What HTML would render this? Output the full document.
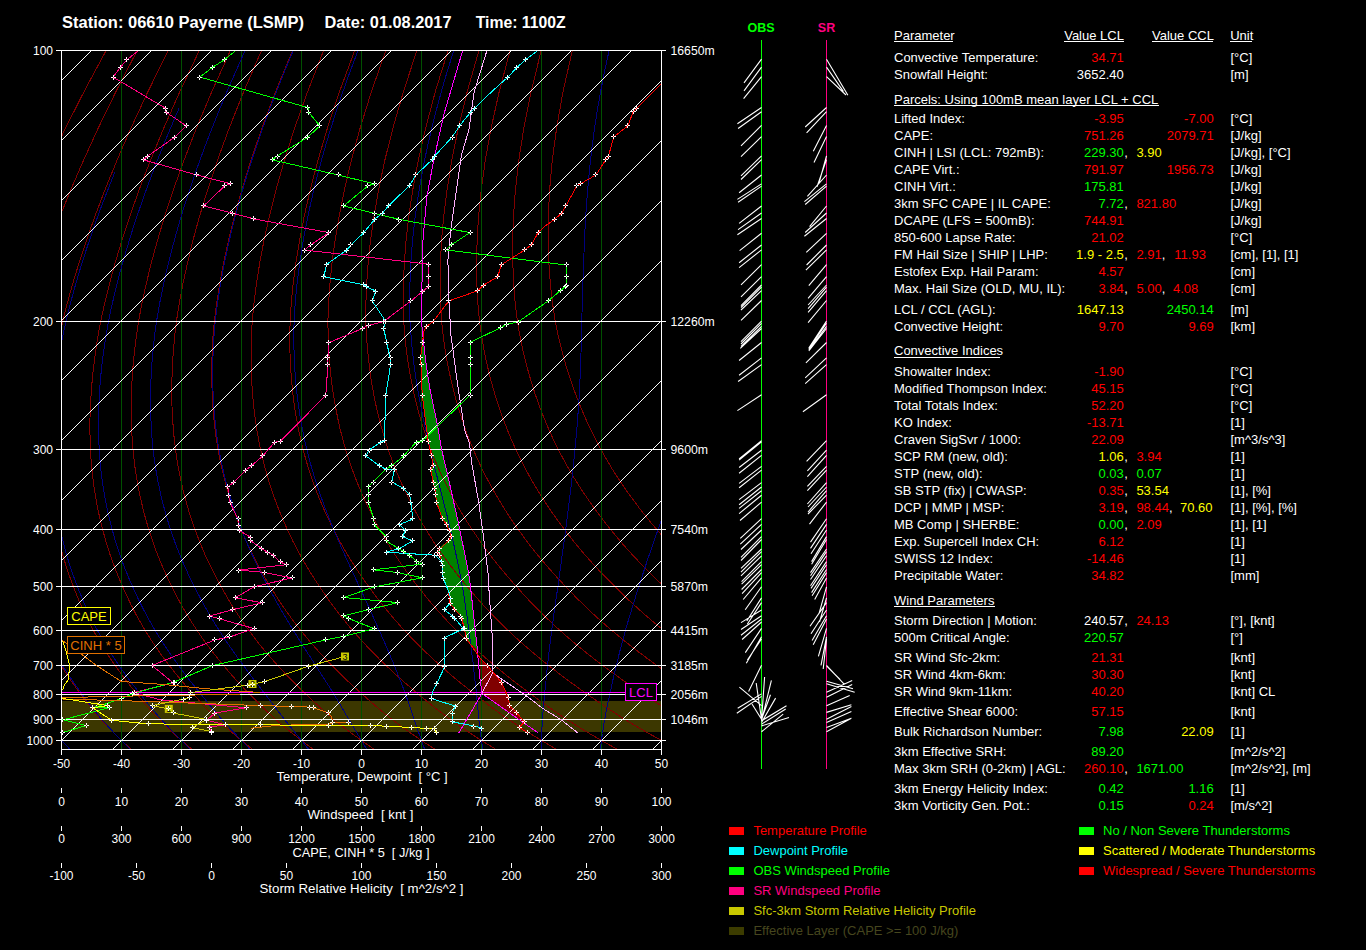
<!DOCTYPE html><html><head><meta charset="utf-8"><style>html,body{margin:0;padding:0;background:#000;width:1366px;height:950px;overflow:hidden;position:relative}</style></head><body><svg width="1366" height="950" viewBox="0 0 1366 950" style="position:absolute;left:0;top:0">
<rect x="0" y="0" width="1366" height="950" fill="#000"/>
<rect x="62" y="701" width="599" height="31" fill="#3c3700"/>
<polygon points="421.9,343.5 421.8,344.5 421.6,345.5 421.5,346.5 421.4,347.5 421.2,348.5 421.1,349.5 421.0,350.5 420.8,351.5 420.7,352.5 420.5,353.5 420.4,354.5 420.3,355.5 420.1,356.5 420.0,357.5 420.1,358.5 420.2,359.5 420.3,360.5 420.4,361.5 420.5,362.5 420.5,363.5 420.6,364.5 420.7,365.5 420.7,366.5 420.7,367.5 420.8,368.5 420.8,369.5 420.8,370.5 420.9,371.5 420.9,372.5 420.9,373.5 421.0,374.5 421.0,375.5 421.0,376.5 421.1,377.5 421.1,378.5 421.2,379.5 421.2,380.5 421.2,381.5 421.3,382.5 421.3,383.5 421.3,384.5 421.4,385.5 421.4,386.5 421.4,387.5 421.5,388.5 421.5,389.5 421.6,390.5 421.6,391.5 421.6,392.5 421.7,393.5 421.7,394.5 421.8,395.5 421.9,396.5 422.1,397.5 422.2,398.5 422.3,399.5 422.5,400.5 422.6,401.5 422.7,402.5 422.9,403.5 423.0,404.5 423.1,405.5 423.2,406.5 423.4,407.5 423.5,408.5 423.6,409.5 423.8,410.5 423.9,411.5 424.0,412.5 424.2,413.5 424.3,414.5 424.4,415.5 424.5,416.5 424.7,417.5 424.8,418.5 424.9,419.5 425.1,420.5 425.2,421.5 425.3,422.5 425.5,423.5 425.6,424.5 425.7,425.5 425.8,426.5 426.0,427.5 426.1,428.5 426.2,429.5 426.4,430.5 426.5,431.5 426.6,432.5 426.7,433.5 426.8,434.5 427.0,435.5 427.1,436.5 427.2,437.5 427.3,438.5 427.4,439.5 427.5,440.5 427.7,441.5 428.0,442.5 428.2,443.5 428.4,444.5 428.7,445.5 428.9,446.5 429.1,447.5 429.4,448.5 429.6,449.5 429.8,450.5 430.1,451.5 430.3,452.5 430.6,453.5 430.8,454.5 431.0,455.5 431.2,456.5 431.3,457.5 431.5,458.5 431.7,459.5 431.8,460.5 432.0,461.5 432.2,462.5 432.3,463.5 432.5,464.5 432.3,465.5 431.7,466.5 431.0,467.5 430.3,468.5 430.2,469.5 430.4,470.5 430.6,471.5 430.8,472.5 431.0,473.5 431.2,474.5 431.4,475.5 431.6,476.5 431.8,477.5 432.0,478.5 432.2,479.5 432.4,480.5 432.6,481.5 432.9,482.5 433.1,483.5 433.4,484.5 433.6,485.5 433.9,486.5 434.1,487.5 434.3,488.5 434.5,489.5 434.7,490.5 434.8,491.5 435.0,492.5 435.1,493.5 435.2,494.5 435.3,495.5 435.5,496.5 435.6,497.5 435.7,498.5 435.8,499.5 435.9,500.5 436.0,501.5 436.3,502.5 436.6,503.5 437.0,504.5 437.3,505.5 437.7,506.5 438.0,507.5 438.4,508.5 438.7,509.5 439.1,510.5 439.4,511.5 439.8,512.5 440.1,513.5 440.5,514.5 440.8,515.5 441.2,516.5 441.5,517.5 441.9,518.5 442.6,519.5 443.4,520.5 444.1,521.5 444.9,522.5 445.6,523.5 446.3,524.5 446.7,525.5 447.2,526.5 447.7,527.5 448.1,528.5 448.6,529.5 448.9,530.5 449.3,531.5 449.6,532.5 449.9,533.5 450.2,534.5 450.6,535.5 450.6,536.5 449.9,537.5 449.2,538.5 448.4,539.5 447.7,540.5 446.6,541.5 445.6,542.5 444.5,543.5 443.4,544.5 442.4,545.5 441.3,546.5 440.3,547.5 439.2,548.5 438.5,549.5 437.7,550.5 437.0,551.5 437.5,552.5 438.4,553.5 439.2,554.5 439.6,555.5 439.9,556.5 440.2,557.5 440.4,558.5 440.7,559.5 441.0,560.5 441.2,561.5 441.4,562.5 441.6,563.5 441.8,564.5 441.9,565.5 441.9,566.5 441.9,567.5 441.9,568.5 441.9,569.5 441.9,570.5 441.9,571.5 442.0,572.5 442.2,573.5 442.3,574.5 442.4,575.5 442.6,576.5 442.7,577.5 443.1,578.5 443.5,579.5 443.9,580.5 444.3,581.5 444.7,582.5 445.1,583.5 445.5,584.5 445.9,585.5 446.3,586.5 446.7,587.5 447.1,588.5 447.5,589.5 447.8,590.5 448.0,591.5 448.1,592.5 448.2,593.5 448.4,594.5 448.5,595.5 448.6,596.5 448.8,597.5 448.9,598.5 449.0,599.5 449.2,600.5 449.3,601.5 449.4,602.5 449.9,603.5 450.7,604.5 451.5,605.5 452.3,606.5 453.1,607.5 453.9,608.5 454.7,609.5 455.6,610.5 456.6,611.5 457.5,612.5 458.4,613.5 459.4,614.5 460.3,615.5 460.7,616.5 461.1,617.5 461.4,618.5 461.6,619.5 461.9,620.5 462.1,621.5 462.4,622.5 462.6,623.5 462.9,624.5 463.1,625.5 463.4,626.5 463.6,627.5 463.9,628.5 464.1,629.5 464.3,630.5 464.5,631.5 464.7,632.5 465.0,633.5 465.2,634.5 465.4,635.5 465.6,636.5 465.8,637.5 466.1,638.5 466.9,639.5 467.6,640.5 468.3,641.5 469.0,642.5 469.7,643.5 470.4,644.5 471.1,645.5 471.8,646.5 472.5,647.5 473.3,648.5 474.0,649.5 474.7,650.5 476.9,650.5 476.9,649.5 476.8,648.5 476.7,647.5 476.6,646.5 476.5,645.5 476.4,644.5 476.3,643.5 476.2,642.5 476.1,641.5 476.0,640.5 475.9,639.5 475.8,638.5 475.7,637.5 475.5,636.5 475.4,635.5 475.3,634.5 475.2,633.5 475.1,632.5 475.0,631.5 474.9,630.5 474.8,629.5 474.7,628.5 474.6,627.5 474.4,626.5 474.3,625.5 474.2,624.5 474.1,623.5 474.0,622.5 473.9,621.5 473.8,620.5 473.7,619.5 473.6,618.5 473.4,617.5 473.3,616.5 473.2,615.5 473.1,614.5 473.0,613.5 472.9,612.5 472.8,611.5 472.7,610.5 472.6,609.5 472.5,608.5 472.3,607.5 472.2,606.5 472.1,605.5 472.0,604.5 471.9,603.5 471.8,602.5 471.7,601.5 471.6,600.5 471.5,599.5 471.3,598.5 471.2,597.5 471.1,596.5 471.0,595.5 470.9,594.5 470.8,593.5 470.7,592.5 470.6,591.5 470.5,590.5 470.4,589.5 470.2,588.5 470.1,587.5 470.0,586.5 469.9,585.5 469.8,584.5 469.7,583.5 469.5,582.5 469.4,581.5 469.3,580.5 469.1,579.5 469.0,578.5 468.8,577.5 468.7,576.5 468.6,575.5 468.4,574.5 468.3,573.5 468.1,572.5 468.0,571.5 467.8,570.5 467.6,569.5 467.4,568.5 467.2,567.5 466.9,566.5 466.7,565.5 466.5,564.5 466.3,563.5 466.1,562.5 465.9,561.5 465.7,560.5 465.5,559.5 465.3,558.5 465.1,557.5 464.9,556.5 464.7,555.5 464.5,554.5 464.3,553.5 464.1,552.5 463.8,551.5 463.6,550.5 463.4,549.5 463.2,548.5 463.0,547.5 462.8,546.5 462.6,545.5 462.4,544.5 462.2,543.5 462.0,542.5 461.8,541.5 461.6,540.5 461.4,539.5 461.2,538.5 461.0,537.5 460.8,536.5 460.5,535.5 460.3,534.5 460.1,533.5 459.9,532.5 459.7,531.5 459.5,530.5 459.3,529.5 459.1,528.5 458.9,527.5 458.7,526.5 458.5,525.5 458.3,524.5 458.1,523.5 457.9,522.5 457.6,521.5 457.4,520.5 457.2,519.5 457.0,518.5 456.7,517.5 456.5,516.5 456.3,515.5 456.1,514.5 455.9,513.5 455.6,512.5 455.4,511.5 455.2,510.5 455.0,509.5 454.7,508.5 454.5,507.5 454.3,506.5 454.1,505.5 453.9,504.5 453.6,503.5 453.4,502.5 453.2,501.5 453.0,500.5 452.7,499.5 452.5,498.5 452.3,497.5 452.1,496.5 451.8,495.5 451.6,494.5 451.4,493.5 451.2,492.5 451.0,491.5 450.7,490.5 450.5,489.5 450.3,488.5 450.1,487.5 449.8,486.5 449.6,485.5 449.4,484.5 449.2,483.5 449.0,482.5 448.7,481.5 448.5,480.5 448.3,479.5 448.1,478.5 447.8,477.5 447.6,476.5 447.4,475.5 447.1,474.5 446.9,473.5 446.7,472.5 446.4,471.5 446.2,470.5 446.0,469.5 445.7,468.5 445.5,467.5 445.2,466.5 445.0,465.5 444.8,464.5 444.5,463.5 444.3,462.5 444.1,461.5 443.8,460.5 443.6,459.5 443.3,458.5 443.1,457.5 442.9,456.5 442.6,455.5 442.4,454.5 442.2,453.5 441.9,452.5 441.7,451.5 441.5,450.5 441.2,449.5 441.0,448.5 440.8,447.5 440.6,446.5 440.5,445.5 440.3,444.5 440.1,443.5 440.0,442.5 439.8,441.5 439.6,440.5 439.5,439.5 439.3,438.5 439.1,437.5 439.0,436.5 438.8,435.5 438.6,434.5 438.5,433.5 438.3,432.5 438.1,431.5 437.9,430.5 437.8,429.5 437.6,428.5 437.4,427.5 437.3,426.5 437.1,425.5 436.9,424.5 436.8,423.5 436.5,422.5 436.3,421.5 436.1,420.5 435.9,419.5 435.7,418.5 435.5,417.5 435.3,416.5 435.1,415.5 434.9,414.5 434.7,413.5 434.4,412.5 434.2,411.5 434.0,410.5 433.8,409.5 433.6,408.5 433.4,407.5 433.2,406.5 433.0,405.5 432.8,404.5 432.6,403.5 432.3,402.5 432.1,401.5 431.9,400.5 431.7,399.5 431.5,398.5 431.3,397.5 431.1,396.5 430.9,395.5 430.7,394.5 430.5,393.5 430.2,392.5 430.0,391.5 429.8,390.5 429.6,389.5 429.4,388.5 429.2,387.5 429.1,386.5 428.9,385.5 428.8,384.5 428.6,383.5 428.5,382.5 428.3,381.5 428.2,380.5 428.0,379.5 427.9,378.5 427.7,377.5 427.6,376.5 427.4,375.5 427.3,374.5 427.1,373.5 427.0,372.5 426.8,371.5 426.7,370.5 426.5,369.5 426.4,368.5 426.2,367.5 426.1,366.5 425.9,365.5 425.8,364.5 425.7,363.5 425.5,362.5 425.4,361.5 425.3,360.5 425.2,359.5 425.0,358.5 424.9,357.5 424.8,356.5 424.7,355.5 424.6,354.5 424.4,353.5 424.3,352.5 424.2,351.5 424.1,350.5 424.0,349.5 423.8,348.5 423.7,347.5 423.6,346.5 423.5,345.5 423.4,344.5 423.2,343.5" fill="#008000" shape-rendering="crispEdges"/>
<polygon points="479.8,657.7 487.0,665.0 500.9,681.7 507.8,697.0 509.2,705.4 516.2,712.3 523.8,721.4 523.8,722.5 481.5,693.0 480.5,675.0 479.8,657.7" fill="#800000"/>
<g shape-rendering="crispEdges">
<polyline points="69.9,749.0 61.5,740.5 61.0,740.0" fill="none" stroke="#800000" stroke-width="1"/>
<polyline points="61.0,137.5 65.5,128.2 84.0,91.7 106.1,50.5" fill="none" stroke="#800000" stroke-width="1"/>
<polyline points="130.7,749.0 121.5,740.5 119.5,738.5 117.4,736.5 115.4,734.5 113.3,732.5 111.3,730.4 109.2,728.3 107.2,726.1 105.1,723.9 103.1,721.7 101.0,719.5 99.0,717.2 97.0,714.8 95.0,712.4 93.0,710.0 91.0,707.5 89.0,705.0 87.1,702.4 85.1,699.8 83.1,697.2 81.1,694.5 79.1,691.8 77.0,689.1 75.0,686.3 73.0,683.5 71.0,680.7 69.0,677.7 67.0,674.8 65.0,671.7 63.0,668.6 61.0,665.5" fill="none" stroke="#800000" stroke-width="1"/>
<polyline points="61.0,213.9 70.6,190.2 83.3,160.8 98.2,128.2 115.9,91.7 137.2,50.5" fill="none" stroke="#800000" stroke-width="1"/>
<polyline points="191.5,749.0 181.5,740.5 179.3,738.5 177.1,736.5 174.9,734.5 172.6,732.5 170.4,730.4 168.2,728.3 165.9,726.1 163.7,723.9 161.5,721.7 159.2,719.5 157.1,717.2 154.9,714.8 152.7,712.4 150.5,710.0 148.3,707.5 146.1,705.0 143.9,702.4 141.8,699.8 139.6,697.2 137.4,694.5 135.2,691.8 132.9,689.1 130.7,686.3 128.5,683.5 126.2,680.7 124.0,677.7 121.8,674.8 119.6,671.7 117.4,668.6 115.2,665.5 112.9,662.3 110.7,659.1 108.5,655.7 106.3,652.4 104.1,648.9 102.0,645.4 99.8,641.8 97.7,638.1 95.5,634.3 93.4,630.5 91.3,626.6 89.2,622.5 87.1,618.4 85.1,614.2 83.1,609.9 81.1,605.4 79.1,600.9 77.2,596.2 75.3,591.4 73.4,586.5 71.5,581.5 69.6,576.4 67.8,571.1 66.0,565.7 64.3,560.1 62.6,554.4 61.0,548.6" fill="none" stroke="#800000" stroke-width="1"/>
<polyline points="61.0,329.8 62.7,321.5 67.2,303.6 72.5,284.4 78.8,263.7 86.1,241.3 94.7,216.9 104.8,190.2 116.8,160.8 130.9,128.2 147.9,91.7 168.3,50.5" fill="none" stroke="#800000" stroke-width="1"/>
<polyline points="252.2,749.0 241.5,740.5 239.1,738.5 236.7,736.5 234.3,734.5 231.9,732.5 229.5,730.4 227.1,728.3 224.7,726.1 222.3,723.9 219.9,721.7 217.5,719.5 215.1,717.2 212.7,714.8 210.3,712.4 208.0,710.0 205.6,707.5 203.2,705.0 200.8,702.4 198.5,699.8 196.1,697.2 193.7,694.5 191.3,691.8 188.8,689.1 186.4,686.3 183.9,683.5 181.5,680.7 179.1,677.7 176.6,674.8 174.2,671.7 171.8,668.6 169.3,665.5 166.9,662.3 164.5,659.1 162.0,655.7 159.6,652.4 157.2,648.9 154.8,645.4 152.4,641.8 150.0,638.1 147.6,634.3 145.2,630.5 142.9,626.6 140.6,622.5 138.2,618.4 135.9,614.2 133.7,609.9 131.4,605.4 129.2,600.9 127.0,596.2 124.8,591.4 122.6,586.5 120.4,581.5 118.3,576.4 116.1,571.1 114.1,565.7 112.0,560.1 110.0,554.4 108.1,548.5 106.2,542.4 104.4,536.0 102.7,529.5 101.0,522.8 99.3,515.8 97.8,508.6 96.3,501.1 95.0,493.4 93.8,485.3 92.7,476.9 91.8,468.2 91.0,459.0 90.4,449.5 90.1,439.5 89.9,429.0 90.0,418.0 90.4,406.4 91.1,394.2 92.1,381.3 93.5,367.7 95.3,353.3 97.7,337.9 100.6,321.5 104.6,303.6 109.3,284.4 114.9,263.7 121.6,241.3 129.6,216.9 139.0,190.2 150.3,160.8 163.7,128.2 179.8,91.7 199.3,50.5" fill="none" stroke="#800000" stroke-width="1"/>
<polyline points="313.0,749.0 301.5,740.5 298.9,738.5 296.4,736.5 293.8,734.5 291.2,732.5 288.7,730.4 286.1,728.3 283.5,726.1 280.9,723.9 278.3,721.7 275.7,719.5 273.1,717.2 270.6,714.8 268.0,712.4 265.4,710.0 262.9,707.5 260.3,705.0 257.7,702.4 255.1,699.8 252.6,697.2 250.0,694.5 247.3,691.8 244.7,689.1 242.1,686.3 239.4,683.5 236.8,680.7 234.1,677.7 231.5,674.8 228.8,671.7 226.2,668.6 223.5,665.5 220.9,662.3 218.2,659.1 215.6,655.7 212.9,652.4 210.3,648.9 207.6,645.4 205.0,641.8 202.3,638.1 199.7,634.3 197.1,630.5 194.5,626.6 191.9,622.5 189.3,618.4 186.8,614.2 184.2,609.9 181.7,605.4 179.2,600.9 176.7,596.2 174.3,591.4 171.8,586.5 169.4,581.5 166.9,576.4 164.5,571.1 162.1,565.7 159.8,560.1 157.5,554.4 155.2,548.5 153.1,542.4 150.9,536.0 148.8,529.5 146.8,522.8 144.8,515.8 143.0,508.6 141.2,501.1 139.5,493.4 137.9,485.3 136.4,476.9 135.1,468.2 134.0,459.0 133.0,449.5 132.2,439.5 131.6,429.0 131.3,418.0 131.2,406.4 131.4,394.2 132.0,381.3 132.9,367.7 134.3,353.3 136.1,337.9 138.5,321.5 141.9,303.6 146.1,284.4 151.1,263.7 157.2,241.3 164.5,216.9 173.2,190.2 183.8,160.8 196.4,128.2 211.8,91.7 230.4,50.5" fill="none" stroke="#800000" stroke-width="1"/>
<polyline points="373.7,749.0 361.5,740.5 358.8,738.5 356.0,736.5 353.3,734.5 350.5,732.5 347.8,730.4 345.0,728.3 342.3,726.1 339.5,723.9 336.7,721.7 333.9,719.5 331.2,717.2 328.4,714.8 325.7,712.4 322.9,710.0 320.1,707.5 317.4,705.0 314.6,702.4 311.8,699.8 309.1,697.2 306.3,694.5 303.4,691.8 300.6,689.1 297.7,686.3 294.9,683.5 292.0,680.7 289.2,677.7 286.3,674.8 283.5,671.7 280.6,668.6 277.7,665.5 274.8,662.3 272.0,659.1 269.1,655.7 266.2,652.4 263.3,648.9 260.4,645.4 257.5,641.8 254.7,638.1 251.8,634.3 248.9,630.5 246.1,626.6 243.3,622.5 240.4,618.4 237.6,614.2 234.8,609.9 232.0,605.4 229.3,600.9 226.5,596.2 223.8,591.4 221.1,586.5 218.3,581.5 215.6,576.4 212.9,571.1 210.2,565.7 207.5,560.1 204.9,554.4 202.4,548.5 199.9,542.4 197.4,536.0 195.0,529.5 192.6,522.8 190.3,515.8 188.1,508.6 186.0,501.1 183.9,493.4 182.0,485.3 180.1,476.9 178.4,468.2 176.9,459.0 175.5,449.5 174.3,439.5 173.3,429.0 172.6,418.0 172.0,406.4 171.8,394.2 171.9,381.3 172.3,367.7 173.2,353.3 174.5,337.9 176.4,321.5 179.2,303.6 182.8,284.4 187.3,263.7 192.7,241.3 199.4,216.9 207.5,190.2 217.3,160.8 229.2,128.2 243.7,91.7 261.5,50.5" fill="none" stroke="#800000" stroke-width="1"/>
<polyline points="434.5,749.0 421.5,740.5 418.6,738.5 415.7,736.5 412.8,734.5 409.8,732.5 406.9,730.4 404.0,728.3 401.0,726.1 398.1,723.9 395.1,721.7 392.1,719.5 389.2,717.2 386.3,714.8 383.3,712.4 380.4,710.0 377.4,707.5 374.5,705.0 371.5,702.4 368.5,699.8 365.6,697.2 362.6,694.5 359.5,691.8 356.5,689.1 353.4,686.3 350.4,683.5 347.3,680.7 344.2,677.7 341.2,674.8 338.1,671.7 335.0,668.6 331.9,665.5 328.8,662.3 325.7,659.1 322.6,655.7 319.5,652.4 316.4,648.9 313.2,645.4 310.1,641.8 307.0,638.1 303.9,634.3 300.8,630.5 297.7,626.6 294.6,622.5 291.5,618.4 288.5,614.2 285.4,609.9 282.3,605.4 279.3,600.9 276.3,596.2 273.3,591.4 270.3,586.5 267.2,581.5 264.2,576.4 261.2,571.1 258.2,565.7 255.3,560.1 252.4,554.4 249.5,548.5 246.7,542.4 243.9,536.0 241.2,529.5 238.5,522.8 235.9,515.8 233.3,508.6 230.8,501.1 228.4,493.4 226.1,485.3 223.9,476.9 221.8,468.2 219.8,459.0 218.0,449.5 216.4,439.5 215.0,429.0 213.8,418.0 212.9,406.4 212.2,394.2 211.8,381.3 211.8,367.7 212.1,353.3 212.9,337.9 214.3,321.5 216.6,303.6 219.6,284.4 223.4,263.7 228.3,241.3 234.3,216.9 241.7,190.2 250.8,160.8 261.9,128.2 275.6,91.7 292.6,50.5" fill="none" stroke="#800000" stroke-width="1"/>
<polyline points="495.3,749.0 481.5,740.5 478.4,738.5 475.3,736.5 472.3,734.5 469.2,732.5 466.0,730.4 462.9,728.3 459.8,726.1 456.6,723.9 453.5,721.7 450.3,719.5 447.2,717.2 444.1,714.8 441.0,712.4 437.8,710.0 434.7,707.5 431.6,705.0 428.4,702.4 425.2,699.8 422.0,697.2 418.9,694.5 415.6,691.8 412.4,689.1 409.1,686.3 405.8,683.5 402.6,680.7 399.3,677.7 396.0,674.8 392.7,671.7 389.4,668.6 386.1,665.5 382.8,662.3 379.4,659.1 376.1,655.7 372.8,652.4 369.4,648.9 366.1,645.4 362.7,641.8 359.4,638.1 356.0,634.3 352.7,630.5 349.3,626.6 346.0,622.5 342.6,618.4 339.3,614.2 336.0,609.9 332.7,605.4 329.4,600.9 326.1,596.2 322.8,591.4 319.5,586.5 316.2,581.5 312.9,576.4 309.6,571.1 306.3,565.7 303.1,560.1 299.9,554.4 296.7,548.5 293.5,542.4 290.4,536.0 287.4,529.5 284.3,522.8 281.4,515.8 278.4,508.6 275.6,501.1 272.8,493.4 270.1,485.3 267.6,476.9 265.1,468.2 262.8,459.0 260.6,449.5 258.6,439.5 256.7,429.0 255.1,418.0 253.7,406.4 252.6,394.2 251.7,381.3 251.2,367.7 251.1,353.3 251.4,337.9 252.2,321.5 253.9,303.6 256.4,284.4 259.6,263.7 263.8,241.3 269.2,216.9 275.9,190.2 284.3,160.8 294.6,128.2 307.6,91.7 323.6,50.5" fill="none" stroke="#800000" stroke-width="1"/>
<polyline points="556.0,749.0 541.5,740.5 538.3,738.5 535.0,736.5 531.7,734.5 528.5,732.5 525.2,730.4 521.9,728.3 518.6,726.1 515.2,723.9 511.9,721.7 508.6,719.5 505.3,717.2 502.0,714.8 498.6,712.4 495.3,710.0 492.0,707.5 488.6,705.0 485.3,702.4 481.9,699.8 478.5,697.2 475.2,694.5 471.7,691.8 468.3,689.1 464.8,686.3 461.3,683.5 457.8,680.7 454.3,677.7 450.8,674.8 447.3,671.7 443.8,668.6 440.3,665.5 436.7,662.3 433.2,659.1 429.6,655.7 426.0,652.4 422.5,648.9 418.9,645.4 415.3,641.8 411.7,638.1 408.1,634.3 404.5,630.5 400.9,626.6 397.3,622.5 393.7,618.4 390.1,614.2 386.6,609.9 383.0,605.4 379.4,600.9 375.8,596.2 372.3,591.4 368.7,586.5 365.1,581.5 361.5,576.4 357.9,571.1 354.4,565.7 350.8,560.1 347.3,554.4 343.8,548.5 340.4,542.4 336.9,536.0 333.6,529.5 330.2,522.8 326.9,515.8 323.6,508.6 320.4,501.1 317.3,493.4 314.2,485.3 311.3,476.9 308.4,468.2 305.7,459.0 303.1,449.5 300.7,439.5 298.4,429.0 296.4,418.0 294.5,406.4 292.9,394.2 291.6,381.3 290.6,367.7 290.0,353.3 289.8,337.9 290.1,321.5 291.2,303.6 293.1,284.4 295.8,263.7 299.4,241.3 304.1,216.9 310.1,190.2 317.8,160.8 327.4,128.2 339.5,91.7 354.7,50.5" fill="none" stroke="#800000" stroke-width="1"/>
<polyline points="616.8,749.0 601.5,740.5 598.1,738.5 594.7,736.5 591.2,734.5 587.8,732.5 584.3,730.4 580.8,728.3 577.3,726.1 573.8,723.9 570.3,721.7 566.8,719.5 563.3,717.2 559.8,714.8 556.3,712.4 552.8,710.0 549.3,707.5 545.7,705.0 542.2,702.4 538.6,699.8 535.0,697.2 531.5,694.5 527.8,691.8 524.1,689.1 520.5,686.3 516.8,683.5 513.1,680.7 509.4,677.7 505.7,674.8 502.0,671.7 498.2,668.6 494.5,665.5 490.7,662.3 486.9,659.1 483.1,655.7 479.3,652.4 475.5,648.9 471.7,645.4 467.9,641.8 464.0,638.1 460.2,634.3 456.4,630.5 452.5,626.6 448.7,622.5 444.8,618.4 441.0,614.2 437.1,609.9 433.3,605.4 429.4,600.9 425.6,596.2 421.8,591.4 417.9,586.5 414.0,581.5 410.2,576.4 406.3,571.1 402.4,565.7 398.6,560.1 394.8,554.4 391.0,548.5 387.2,542.4 383.5,536.0 379.7,529.5 376.0,522.8 372.4,515.8 368.8,508.6 365.2,501.1 361.7,493.4 358.3,485.3 355.0,476.9 351.8,468.2 348.6,459.0 345.6,449.5 342.8,439.5 340.1,429.0 337.7,418.0 335.4,406.4 333.3,394.2 331.5,381.3 330.1,367.7 328.9,353.3 328.2,337.9 327.9,321.5 328.6,303.6 329.9,284.4 331.9,263.7 334.9,241.3 339.0,216.9 344.3,190.2 351.2,160.8 360.1,128.2 371.4,91.7 385.8,50.5" fill="none" stroke="#800000" stroke-width="1"/>
<polyline points="661.0,740.2 657.9,738.5 654.3,736.5 650.7,734.5 647.1,732.5 643.4,730.4 639.8,728.3 636.1,726.1 632.4,723.9 628.7,721.7 625.0,719.5 621.3,717.2 617.7,714.8 614.0,712.4 610.3,710.0 606.5,707.5 602.8,705.0 599.1,702.4 595.3,699.8 591.5,697.2 587.7,694.5 583.9,691.8 580.0,689.1 576.2,686.3 572.3,683.5 568.4,680.7 564.4,677.7 560.5,674.8 556.6,671.7 552.6,668.6 548.7,665.5 544.7,662.3 540.7,659.1 536.6,655.7 532.6,652.4 528.6,648.9 524.5,645.4 520.4,641.8 516.4,638.1 512.3,634.3 508.2,630.5 504.1,626.6 500.0,622.5 495.9,618.4 491.8,614.2 487.7,609.9 483.6,605.4 479.5,600.9 475.4,596.2 471.3,591.4 467.2,586.5 463.0,581.5 458.8,576.4 454.7,571.1 450.5,565.7 446.4,560.1 442.2,554.4 438.1,548.5 434.0,542.4 430.0,536.0 425.9,529.5 421.9,522.8 417.9,515.8 413.9,508.6 410.0,501.1 406.2,493.4 402.4,485.3 398.7,476.9 395.1,468.2 391.6,459.0 388.2,449.5 384.9,439.5 381.9,429.0 378.9,418.0 376.2,406.4 373.7,394.2 371.4,381.3 369.5,367.7 367.9,353.3 366.6,337.9 365.8,321.5 365.9,303.6 366.6,284.4 368.1,263.7 370.4,241.3 373.9,216.9 378.5,190.2 384.7,160.8 392.9,128.2 403.4,91.7 416.9,50.5" fill="none" stroke="#800000" stroke-width="1"/>
<polyline points="661.0,705.7 659.9,705.0 656.0,702.4 652.0,699.8 648.0,697.2 644.0,694.5 640.0,691.8 635.9,689.1 631.8,686.3 627.7,683.5 623.6,680.7 619.5,677.7 615.4,674.8 611.2,671.7 607.0,668.6 602.8,665.5 598.6,662.3 594.4,659.1 590.1,655.7 585.9,652.4 581.6,648.9 577.3,645.4 573.0,641.8 568.7,638.1 564.4,634.3 560.1,630.5 555.7,626.6 551.4,622.5 547.0,618.4 542.7,614.2 538.3,609.9 533.9,605.4 529.5,600.9 525.2,596.2 520.8,591.4 516.4,586.5 511.9,581.5 507.5,576.4 503.0,571.1 498.6,565.7 494.1,560.1 489.7,554.4 485.3,548.5 480.9,542.4 476.5,536.0 472.1,529.5 467.7,522.8 463.4,515.8 459.1,508.6 454.8,501.1 450.6,493.4 446.5,485.3 442.4,476.9 438.4,468.2 434.5,459.0 430.7,449.5 427.1,439.5 423.6,429.0 420.2,418.0 417.0,406.4 414.1,394.2 411.4,381.3 408.9,367.7 406.8,353.3 405.0,337.9 403.7,321.5 403.2,303.6 403.4,284.4 404.3,263.7 406.0,241.3 408.7,216.9 412.7,190.2 418.2,160.8 425.6,128.2 435.3,91.7 448.0,50.5" fill="none" stroke="#800000" stroke-width="1"/>
<polyline points="661.0,668.3 657.0,665.5 652.6,662.3 648.1,659.1 643.7,655.7 639.2,652.4 634.7,648.9 630.1,645.4 625.6,641.8 621.1,638.1 616.5,634.3 611.9,630.5 607.3,626.6 602.7,622.5 598.1,618.4 593.5,614.2 588.9,609.9 584.2,605.4 579.6,600.9 574.9,596.2 570.3,591.4 565.6,586.5 560.9,581.5 556.1,576.4 551.4,571.1 546.6,565.7 541.9,560.1 537.1,554.4 532.4,548.5 527.7,542.4 523.0,536.0 518.3,529.5 513.6,522.8 508.9,515.8 504.3,508.6 499.7,501.1 495.1,493.4 490.6,485.3 486.1,476.9 481.7,468.2 477.5,459.0 473.3,449.5 469.2,439.5 465.3,429.0 461.5,418.0 457.9,406.4 454.5,394.2 451.3,381.3 448.3,367.7 445.7,353.3 443.4,337.9 441.6,321.5 440.6,303.6 440.2,284.4 440.4,263.7 441.5,241.3 443.6,216.9 447.0,190.2 451.7,160.8 458.3,128.2 467.2,91.7 479.0,50.5" fill="none" stroke="#800000" stroke-width="1"/>
<polyline points="661.0,628.2 658.9,626.6 654.1,622.5 649.2,618.4 644.3,614.2 639.5,609.9 634.6,605.4 629.6,600.9 624.7,596.2 619.8,591.4 614.8,586.5 609.8,581.5 604.8,576.4 599.7,571.1 594.7,565.7 589.6,560.1 584.6,554.4 579.5,548.5 574.5,542.4 569.5,536.0 564.5,529.5 559.4,522.8 554.4,515.8 549.4,508.6 544.5,501.1 539.5,493.4 534.7,485.3 529.8,476.9 525.1,468.2 520.4,459.0 515.8,449.5 511.3,439.5 507.0,429.0 502.8,418.0 498.7,406.4 494.8,394.2 491.2,381.3 487.8,367.7 484.6,353.3 481.9,337.9 479.5,321.5 477.9,303.6 476.9,284.4 476.6,263.7 477.1,241.3 478.5,216.9 481.2,190.2 485.2,160.8 491.1,128.2 499.2,91.7 510.1,50.5" fill="none" stroke="#800000" stroke-width="1"/>
<polyline points="661.0,583.6 658.7,581.5 653.4,576.4 648.1,571.1 642.7,565.7 637.4,560.1 632.0,554.4 626.7,548.5 621.3,542.4 616.0,536.0 610.6,529.5 605.3,522.8 599.9,515.8 594.6,508.6 589.3,501.1 584.0,493.4 578.7,485.3 573.5,476.9 568.4,468.2 563.3,459.0 558.3,449.5 553.4,439.5 548.7,429.0 544.0,418.0 539.5,406.4 535.2,394.2 531.1,381.3 527.2,367.7 523.6,353.3 520.3,337.9 517.4,321.5 515.2,303.6 513.7,284.4 512.8,263.7 512.6,241.3 513.4,216.9 515.4,190.2 518.7,160.8 523.8,128.2 531.1,91.7 541.2,50.5" fill="none" stroke="#800000" stroke-width="1"/>
<polyline points="661.0,534.3 656.8,529.5 651.1,522.8 645.4,515.8 639.7,508.6 634.1,501.1 628.4,493.4 622.8,485.3 617.3,476.9 611.7,468.2 606.3,459.0 600.9,449.5 595.6,439.5 590.4,429.0 585.3,418.0 580.4,406.4 575.6,394.2 571.0,381.3 566.6,367.7 562.5,353.3 558.7,337.9 555.2,321.5 552.6,303.6 550.4,284.4 548.9,263.7 548.2,241.3 548.3,216.9 549.6,190.2 552.2,160.8 556.6,128.2 563.0,91.7 572.3,50.5" fill="none" stroke="#800000" stroke-width="1"/>
<line x1="121.5" y1="50" x2="121.5" y2="749" stroke="#005000"/>
<line x1="181.5" y1="50" x2="181.5" y2="749" stroke="#005000"/>
<line x1="241.5" y1="50" x2="241.5" y2="749" stroke="#005000"/>
<line x1="301.5" y1="50" x2="301.5" y2="749" stroke="#005000"/>
<line x1="361.5" y1="50" x2="361.5" y2="749" stroke="#005000"/>
<line x1="421.5" y1="50" x2="421.5" y2="749" stroke="#005000"/>
<line x1="481.5" y1="50" x2="481.5" y2="749" stroke="#005000"/>
<line x1="541.5" y1="50" x2="541.5" y2="749" stroke="#005000"/>
<line x1="601.5" y1="50" x2="601.5" y2="749" stroke="#005000"/>
<polyline points="69.7,749.0 68.8,748.1 67.9,747.2 67.0,746.2 66.1,745.3 65.2,744.3 64.3,743.4 63.3,742.4 62.4,741.5 61.5,740.5 61.0,740.0" fill="none" stroke="#000080" stroke-width="1"/>
<polyline points="130.2,749.0 129.2,748.1 128.3,747.2 127.3,746.2 126.3,745.3 125.4,744.3 124.4,743.4 123.4,742.4 122.5,741.5 121.5,740.5 120.5,739.5 119.6,738.5 118.6,737.5 117.6,736.5 116.6,735.5 115.7,734.5 114.7,733.5 113.7,732.5 112.7,731.4 111.7,730.4 110.7,729.3 109.8,728.3 108.8,727.2 107.8,726.1 106.8,725.0 105.8,723.9 104.8,722.8 103.8,721.7 102.8,720.6 101.8,719.5 100.9,718.3 99.9,717.2 98.9,716.0 97.9,714.8 97.0,713.6 96.0,712.4 95.0,711.2 94.1,710.0 93.1,708.7 92.1,707.5 91.1,706.2 90.2,705.0 89.2,703.7 88.2,702.4 87.2,701.1 86.3,699.8 85.3,698.5 84.3,697.2 83.3,695.8 82.4,694.5 81.4,693.2 80.4,691.8 79.4,690.5 78.4,689.1 77.4,687.7 76.4,686.3 75.4,684.9 74.4,683.5 73.4,682.1 72.4,680.7 71.4,679.2 70.4,677.7 69.4,676.3 68.4,674.8 67.4,673.3 66.4,671.7 65.4,670.2 64.4,668.6 63.4,667.1 62.5,665.5 61.5,663.9 61.0,663.2" fill="none" stroke="#000080" stroke-width="1"/>
<polyline points="190.2,749.0 189.3,748.1 188.3,747.2 187.4,746.2 186.4,745.3 185.4,744.3 184.4,743.4 183.5,742.4 182.5,741.5 181.5,740.5 180.5,739.5 179.5,738.5 178.5,737.5 177.5,736.5 176.5,735.5 175.5,734.5 174.5,733.5 173.5,732.5 172.5,731.4 171.5,730.4 170.5,729.3 169.5,728.3 168.5,727.2 167.4,726.1 166.4,725.0 165.4,723.9 164.4,722.8 163.3,721.7 162.3,720.6 161.3,719.5 160.2,718.3 159.2,717.2 158.2,716.0 157.2,714.8 156.2,713.6 155.2,712.4 154.1,711.2 153.1,710.0 152.1,708.7 151.0,707.5 150.0,706.2 149.0,705.0 147.9,703.7 146.9,702.4 145.9,701.1 144.8,699.8 143.8,698.5 142.7,697.2 141.7,695.8 140.7,694.5 139.6,693.2 138.5,691.8 137.4,690.5 136.4,689.1 135.3,687.7 134.2,686.3 133.1,684.9 132.0,683.5 131.0,682.1 129.9,680.7 128.8,679.2 127.7,677.7 126.6,676.3 125.6,674.8 124.5,673.3 123.4,671.7 122.3,670.2 121.2,668.6 120.1,667.1 119.1,665.5 118.0,663.9 116.9,662.3 115.8,660.7 114.7,659.1 113.6,657.4 112.5,655.7 111.4,654.1 110.4,652.4 109.3,650.6 108.2,648.9 107.1,647.2 106.0,645.4 105.0,643.6 103.9,641.8 102.8,640.0 101.7,638.1 100.7,636.2 99.6,634.3 98.6,632.4 97.5,630.5 96.5,628.5 95.4,626.6 94.4,624.6 93.3,622.5 92.3,620.5 91.3,618.4 90.2,616.3 89.2,614.2 88.2,612.0 87.2,609.9 86.2,607.6 85.2,605.4 84.2,603.2 83.2,600.9 82.2,598.6 81.3,596.2 80.3,593.8 79.3,591.4 78.4,589.0 77.5,586.5 76.5,584.0 75.5,581.5 74.6,579.0 73.6,576.4 72.7,573.8 71.8,571.1 70.9,568.5 70.0,565.7 69.1,563.0 68.2,560.1 67.4,557.3 66.5,554.4 65.7,551.5 64.9,548.5 64.1,545.4 63.3,542.4 62.5,539.2 61.8,536.0 61.0,532.8 61.0,532.6" fill="none" stroke="#000080" stroke-width="1"/>
<polyline points="61.0,345.8 61.0,345.7 62.5,337.9 64.1,329.8 65.9,321.5 68.1,312.7 70.4,303.6 72.9,294.2 75.6,284.4 78.6,274.2 81.8,263.7 85.3,252.7 89.1,241.3 93.2,229.3 97.6,216.9 102.4,203.8 107.7,190.2 113.4,175.9 114.8,172.4" fill="none" stroke="#000080" stroke-width="1"/>
<polyline points="249.7,749.0 248.8,748.1 247.9,747.2 247.0,746.2 246.1,745.3 245.2,744.3 244.3,743.4 243.4,742.4 242.4,741.5 241.5,740.5 240.6,739.5 239.6,738.5 238.7,737.5 237.7,736.5 236.8,735.5 235.8,734.5 234.9,733.5 233.9,732.5 232.9,731.4 232.0,730.4 231.0,729.3 230.0,728.3 229.0,727.2 228.0,726.1 227.0,725.0 226.0,723.9 225.0,722.8 224.0,721.7 223.0,720.6 222.0,719.5 221.0,718.3 219.9,717.2 218.9,716.0 217.9,714.8 216.9,713.6 215.9,712.4 214.9,711.2 213.8,710.0 212.8,708.7 211.8,707.5 210.7,706.2 209.7,705.0 208.6,703.7 207.6,702.4 206.5,701.1 205.5,699.8 204.4,698.5 203.4,697.2 202.3,695.8 201.2,694.5 200.1,693.2 199.0,691.8 197.9,690.5 196.8,689.1 195.7,687.7 194.5,686.3 193.4,684.9 192.3,683.5 191.2,682.1 190.0,680.7 188.9,679.2 187.8,677.7 186.6,676.3 185.5,674.8 184.4,673.3 183.2,671.7 182.1,670.2 180.9,668.6 179.8,667.1 178.6,665.5 177.4,663.9 176.3,662.3 175.1,660.7 173.9,659.1 172.8,657.4 171.6,655.7 170.4,654.1 169.3,652.4 168.1,650.6 166.9,648.9 165.7,647.2 164.6,645.4 163.4,643.6 162.2,641.8 161.1,640.0 159.9,638.1 158.7,636.2 157.5,634.3 156.4,632.4 155.2,630.5 154.0,628.5 152.9,626.6 151.7,624.6 150.6,622.5 149.4,620.5 148.3,618.4 147.1,616.3 146.0,614.2 144.8,612.0 143.7,609.9 142.6,607.6 141.4,605.4 140.3,603.2 139.2,600.9 138.1,598.6 137.0,596.2 135.8,593.8 134.7,591.4 133.7,589.0 132.6,586.5 131.5,584.0 130.3,581.5 129.2,579.0 128.2,576.4 127.1,573.8 126.0,571.1 124.9,568.5 123.9,565.7 122.8,563.0 121.8,560.1 120.8,557.3 119.8,554.4 118.8,551.5 117.8,548.5 116.8,545.4 115.8,542.4 114.9,539.2 114.0,536.0 113.1,532.8 112.2,529.5 111.3,526.2 110.4,522.8 109.5,519.3 108.7,515.8 107.9,512.3 107.1,508.6 106.3,504.9 105.6,501.1 104.9,497.3 104.2,493.4 103.5,489.4 102.9,485.3 102.3,481.2 101.8,476.9 101.2,472.6 100.7,468.2 100.3,463.7 99.9,459.0 99.5,454.3 99.2,449.5 99.0,444.6 98.8,439.5 98.6,434.3 98.5,429.0 98.5,423.6 98.5,418.0 98.6,412.3 98.8,406.4 99.1,400.4 99.4,394.2 99.8,387.9 100.3,381.3 100.9,374.6 101.6,367.7 102.5,360.6 103.4,353.3 104.5,345.7 105.6,337.9 107.0,329.8 108.5,321.5 110.3,312.7 112.3,303.6 114.5,294.2 116.9,284.4 119.5,274.2 122.4,263.7 125.6,252.7 129.0,241.3 132.7,229.3 136.8,216.9 141.3,203.8 146.1,190.2 151.4,175.9 157.2,160.8 163.5,145.0 170.5,128.2 178.1,110.5 179.1,108.1" fill="none" stroke="#000080" stroke-width="1"/>
<polyline points="308.4,749.0 307.7,748.1 306.9,747.2 306.2,746.2 305.4,745.3 304.6,744.3 303.9,743.4 303.1,742.4 302.3,741.5 301.5,740.5 300.7,739.5 299.9,738.5 299.1,737.5 298.3,736.5 297.5,735.5 296.6,734.5 295.8,733.5 295.0,732.5 294.1,731.4 293.3,730.4 292.4,729.3 291.6,728.3 290.7,727.2 289.8,726.1 289.0,725.0 288.1,723.9 287.2,722.8 286.3,721.7 285.4,720.6 284.5,719.5 283.6,718.3 282.7,717.2 281.8,716.0 280.9,714.8 280.0,713.6 279.0,712.4 278.1,711.2 277.2,710.0 276.2,708.7 275.3,707.5 274.3,706.2 273.4,705.0 272.4,703.7 271.4,702.4 270.5,701.1 269.5,699.8 268.5,698.5 267.5,697.2 266.5,695.8 265.5,694.5 264.4,693.2 263.4,691.8 262.3,690.5 261.2,689.1 260.2,687.7 259.1,686.3 258.0,684.9 256.9,683.5 255.8,682.1 254.7,680.7 253.6,679.2 252.5,677.7 251.4,676.3 250.3,674.8 249.2,673.3 248.0,671.7 246.9,670.2 245.7,668.6 244.6,667.1 243.4,665.5 242.3,663.9 241.1,662.3 239.9,660.7 238.7,659.1 237.5,657.4 236.3,655.7 235.1,654.1 233.9,652.4 232.7,650.6 231.5,648.9 230.3,647.2 229.1,645.4 227.8,643.6 226.6,641.8 225.4,640.0 224.2,638.1 222.9,636.2 221.7,634.3 220.4,632.4 219.2,630.5 218.0,628.5 216.7,626.6 215.5,624.6 214.2,622.5 213.0,620.5 211.7,618.4 210.5,616.3 209.2,614.2 208.0,612.0 206.8,609.9 205.5,607.6 204.3,605.4 203.0,603.2 201.8,600.9 200.5,598.6 199.3,596.2 198.1,593.8 196.8,591.4 195.6,589.0 194.4,586.5 193.1,584.0 191.9,581.5 190.6,579.0 189.4,576.4 188.1,573.8 186.9,571.1 185.7,568.5 184.5,565.7 183.2,563.0 182.0,560.1 180.8,557.3 179.7,554.4 178.5,551.5 177.3,548.5 176.2,545.4 175.0,542.4 173.9,539.2 172.8,536.0 171.7,532.8 170.6,529.5 169.5,526.2 168.4,522.8 167.3,519.3 166.3,515.8 165.3,512.3 164.3,508.6 163.3,504.9 162.3,501.1 161.4,497.3 160.5,493.4 159.6,489.4 158.8,485.3 157.9,481.2 157.1,476.9 156.4,472.6 155.6,468.2 155.0,463.7 154.3,459.0 153.7,454.3 153.1,449.5 152.6,444.6 152.2,439.5 151.7,434.3 151.4,429.0 151.1,423.6 150.9,418.0 150.7,412.3 150.6,406.4 150.5,400.4 150.6,394.2 150.7,387.9 150.9,381.3 151.2,374.6 151.6,367.7 152.1,360.6 152.8,353.3 153.5,345.7 154.3,337.9 155.3,329.8 156.5,321.5 158.0,312.7 159.6,303.6 161.5,294.2 163.5,284.4 165.8,274.2 168.3,263.7 171.0,252.7 174.1,241.3 177.4,229.3 181.0,216.9 185.1,203.8 189.5,190.2 194.3,175.9 199.7,160.8 205.5,145.0 212.0,128.2 219.1,110.5 226.9,91.7 235.6,71.8 245.2,50.5" fill="none" stroke="#000080" stroke-width="1"/>
<polyline points="366.5,749.0 366.0,748.1 365.5,747.2 364.9,746.2 364.4,745.3 363.8,744.3 363.2,743.4 362.7,742.4 362.1,741.5 361.5,740.5 360.9,739.5 360.3,738.5 359.7,737.5 359.1,736.5 358.5,735.5 357.9,734.5 357.3,733.5 356.7,732.5 356.1,731.4 355.4,730.4 354.8,729.3 354.2,728.3 353.5,727.2 352.9,726.1 352.2,725.0 351.5,723.9 350.9,722.8 350.2,721.7 349.5,720.6 348.8,719.5 348.2,718.3 347.5,717.2 346.8,716.0 346.1,714.8 345.4,713.6 344.7,712.4 344.0,711.2 343.3,710.0 342.6,708.7 341.8,707.5 341.1,706.2 340.4,705.0 339.6,703.7 338.8,702.4 338.1,701.1 337.3,699.8 336.5,698.5 335.7,697.2 334.9,695.8 334.1,694.5 333.3,693.2 332.4,691.8 331.6,690.5 330.7,689.1 329.8,687.7 329.0,686.3 328.1,684.9 327.2,683.5 326.3,682.1 325.3,680.7 324.4,679.2 323.5,677.7 322.5,676.3 321.6,674.8 320.6,673.3 319.7,671.7 318.7,670.2 317.7,668.6 316.7,667.1 315.7,665.5 314.7,663.9 313.6,662.3 312.6,660.7 311.5,659.1 310.5,657.4 309.4,655.7 308.3,654.1 307.2,652.4 306.1,650.6 305.0,648.9 303.9,647.2 302.8,645.4 301.6,643.6 300.5,641.8 299.3,640.0 298.2,638.1 297.0,636.2 295.8,634.3 294.6,632.4 293.4,630.5 292.2,628.5 291.0,626.6 289.8,624.6 288.6,622.5 287.4,620.5 286.1,618.4 284.9,616.3 283.6,614.2 282.4,612.0 281.1,609.9 279.8,607.6 278.6,605.4 277.3,603.2 276.0,600.9 274.7,598.6 273.4,596.2 272.1,593.8 270.8,591.4 269.5,589.0 268.2,586.5 266.9,584.0 265.5,581.5 264.2,579.0 262.8,576.4 261.5,573.8 260.1,571.1 258.8,568.5 257.4,565.7 256.1,563.0 254.7,560.1 253.4,557.3 252.0,554.4 250.7,551.5 249.4,548.5 248.0,545.4 246.7,542.4 245.4,539.2 244.1,536.0 242.8,532.8 241.5,529.5 240.2,526.2 238.9,522.8 237.6,519.3 236.4,515.8 235.1,512.3 233.9,508.6 232.7,504.9 231.5,501.1 230.3,497.3 229.1,493.4 228.0,489.4 226.9,485.3 225.8,481.2 224.7,476.9 223.7,472.6 222.7,468.2 221.7,463.7 220.7,459.0 219.8,454.3 219.0,449.5 218.1,444.6 217.4,439.5 216.7,434.3 216.0,429.0 215.4,423.6 214.8,418.0 214.3,412.3 213.8,406.4 213.5,400.4 213.1,394.2 212.9,387.9 212.8,381.3 212.7,374.6 212.7,367.7 212.9,360.6 213.1,353.3 213.4,345.7 213.9,337.9 214.5,329.8 215.2,321.5 216.3,312.7 217.5,303.6 218.9,294.2 220.5,284.4 222.3,274.2 224.3,263.7 226.6,252.7 229.1,241.3 232.0,229.3 235.1,216.9 238.6,203.8 242.5,190.2 246.8,175.9 251.6,160.8 256.9,145.0 262.7,128.2 269.2,110.5 276.4,91.7 284.4,71.8 293.3,50.5" fill="none" stroke="#000080" stroke-width="1"/>
<polyline points="424.5,749.0 424.2,748.1 423.9,747.2 423.5,746.2 423.2,745.3 422.9,744.3 422.5,743.4 422.2,742.4 421.8,741.5 421.5,740.5 421.2,739.5 420.8,738.5 420.5,737.5 420.1,736.5 419.8,735.5 419.4,734.5 419.0,733.5 418.7,732.5 418.3,731.4 417.9,730.4 417.6,729.3 417.2,728.3 416.8,727.2 416.4,726.1 416.0,725.0 415.7,723.9 415.3,722.8 414.9,721.7 414.5,720.6 414.1,719.5 413.7,718.3 413.3,717.2 412.9,716.0 412.5,714.8 412.1,713.6 411.7,712.4 411.3,711.2 410.9,710.0 410.5,708.7 410.1,707.5 409.7,706.2 409.2,705.0 408.8,703.7 408.4,702.4 407.9,701.1 407.5,699.8 407.0,698.5 406.6,697.2 406.1,695.8 405.6,694.5 405.1,693.2 404.6,691.8 404.1,690.5 403.6,689.1 403.1,687.7 402.5,686.3 402.0,684.9 401.4,683.5 400.9,682.1 400.3,680.7 399.8,679.2 399.2,677.7 398.6,676.3 398.0,674.8 397.4,673.3 396.8,671.7 396.2,670.2 395.6,668.6 395.0,667.1 394.3,665.5 393.7,663.9 393.0,662.3 392.3,660.7 391.6,659.1 390.9,657.4 390.2,655.7 389.5,654.1 388.8,652.4 388.1,650.6 387.3,648.9 386.6,647.2 385.8,645.4 385.0,643.6 384.2,641.8 383.4,640.0 382.6,638.1 381.8,636.2 381.0,634.3 380.1,632.4 379.3,630.5 378.4,628.5 377.5,626.6 376.6,624.6 375.7,622.5 374.8,620.5 373.9,618.4 372.9,616.3 372.0,614.2 371.0,612.0 370.0,609.9 369.0,607.6 368.0,605.4 367.0,603.2 365.9,600.9 364.9,598.6 363.8,596.2 362.7,593.8 361.6,591.4 360.5,589.0 359.4,586.5 358.2,584.0 357.0,581.5 355.8,579.0 354.6,576.4 353.4,573.8 352.2,571.1 350.9,568.5 349.7,565.7 348.4,563.0 347.1,560.1 345.8,557.3 344.5,554.4 343.2,551.5 341.8,548.5 340.5,545.4 339.2,542.4 337.8,539.2 336.5,536.0 335.1,532.8 333.7,529.5 332.3,526.2 330.9,522.8 329.6,519.3 328.2,515.8 326.8,512.3 325.4,508.6 324.0,504.9 322.6,501.1 321.2,497.3 319.8,493.4 318.4,489.4 317.1,485.3 315.7,481.2 314.4,476.9 313.1,472.6 311.8,468.2 310.5,463.7 309.2,459.0 308.0,454.3 306.8,449.5 305.6,444.6 304.5,439.5 303.4,434.3 302.4,429.0 301.3,423.6 300.4,418.0 299.5,412.3 298.6,406.4 297.8,400.4 297.0,394.2 296.3,387.9 295.7,381.3 295.2,374.6 294.7,367.7 294.3,360.6 294.1,353.3 293.9,345.7 293.8,337.9 293.9,329.8 294.1,321.5 294.5,312.7 295.2,303.6 296.0,294.2 297.0,284.4 298.2,274.2 299.6,263.7 301.3,252.7 303.1,241.3 305.3,229.3 307.8,216.9 310.6,203.8 313.7,190.2 317.3,175.9 321.3,160.8 325.8,145.0 330.9,128.2 336.5,110.5 342.9,91.7 350.0,71.8 358.0,50.5" fill="none" stroke="#000080" stroke-width="1"/>
<polyline points="482.7,749.0 482.6,748.1 482.4,747.2 482.3,746.2 482.2,745.3 482.0,744.3 481.9,743.4 481.8,742.4 481.6,741.5 481.5,740.5 481.4,739.5 481.2,738.5 481.1,737.5 481.0,736.5 480.8,735.5 480.7,734.5 480.6,733.5 480.4,732.5 480.3,731.4 480.2,730.4 480.0,729.3 479.9,728.3 479.8,727.2 479.6,726.1 479.5,725.0 479.4,723.9 479.2,722.8 479.1,721.7 479.0,720.6 478.8,719.5 478.7,718.3 478.6,717.2 478.5,716.0 478.4,714.8 478.3,713.6 478.2,712.4 478.1,711.2 478.0,710.0 477.8,708.7 477.7,707.5 477.6,706.2 477.5,705.0 477.4,703.7 477.3,702.4 477.2,701.1 477.0,699.8 476.9,698.5 476.8,697.2 476.7,695.8 476.6,694.5 476.4,693.2 476.3,691.8 476.1,690.5 476.0,689.1 475.8,687.7 475.7,686.3 475.5,684.9 475.3,683.5 475.2,682.1 475.0,680.7 474.9,679.2 474.7,677.7 474.5,676.3 474.4,674.8 474.2,673.3 474.0,671.7 473.9,670.2 473.7,668.6 473.5,667.1 473.3,665.5 473.1,663.9 473.0,662.3 472.8,660.7 472.6,659.1 472.4,657.4 472.2,655.7 471.9,654.1 471.7,652.4 471.5,650.6 471.3,648.9 471.1,647.2 470.9,645.4 470.6,643.6 470.4,641.8 470.2,640.0 469.9,638.1 469.7,636.2 469.4,634.3 469.2,632.4 468.9,630.5 468.7,628.5 468.4,626.6 468.1,624.6 467.8,622.5 467.6,620.5 467.3,618.4 467.0,616.3 466.7,614.2 466.4,612.0 466.0,609.9 465.7,607.6 465.4,605.4 465.0,603.2 464.7,600.9 464.3,598.6 464.0,596.2 463.6,593.8 463.2,591.4 462.8,589.0 462.4,586.5 461.9,584.0 461.5,581.5 461.0,579.0 460.5,576.4 460.0,573.8 459.4,571.1 458.9,568.5 458.4,565.7 457.8,563.0 457.2,560.1 456.6,557.3 456.0,554.4 455.4,551.5 454.7,548.5 454.0,545.4 453.4,542.4 452.6,539.2 451.9,536.0 451.2,532.8 450.4,529.5 449.6,526.2 448.8,522.8 447.9,519.3 447.1,515.8 446.2,512.3 445.2,508.6 444.3,504.9 443.3,501.1 442.4,497.3 441.4,493.4 440.3,489.4 439.3,485.3 438.2,481.2 437.1,476.9 436.0,472.6 434.9,468.2 433.7,463.7 432.6,459.0 431.4,454.3 430.2,449.5 429.1,444.6 427.9,439.5 426.7,434.3 425.5,429.0 424.3,423.6 423.1,418.0 422.0,412.3 420.8,406.4 419.7,400.4 418.6,394.2 417.5,387.9 416.4,381.3 415.4,374.6 414.4,367.7 413.5,360.6 412.7,353.3 411.9,345.7 411.2,337.9 410.6,329.8 410.0,321.5 409.8,312.7 409.7,303.6 409.7,294.2 409.9,284.4 410.3,274.2 410.8,263.7 411.5,252.7 412.5,241.3 413.7,229.3 415.2,216.9 417.0,203.8 419.1,190.2 421.6,175.9 424.5,160.8 427.8,145.0 431.7,128.2 436.2,110.5 441.3,91.7 447.1,71.8 453.8,50.5" fill="none" stroke="#000080" stroke-width="1"/>
<polyline points="541.4,749.0 541.4,748.1 541.4,747.2 541.4,746.2 541.4,745.3 541.4,744.3 541.4,743.4 541.5,742.4 541.5,741.5 541.5,740.5 541.5,739.5 541.6,738.5 541.6,737.5 541.6,736.5 541.7,735.5 541.7,734.5 541.7,733.5 541.8,732.5 541.8,731.4 541.8,730.4 541.9,729.3 541.9,728.3 542.0,727.2 542.0,726.1 542.1,725.0 542.1,723.9 542.2,722.8 542.3,721.7 542.3,720.6 542.4,719.5 542.5,718.3 542.6,717.2 542.7,716.0 542.8,714.8 542.9,713.6 543.0,712.4 543.1,711.2 543.2,710.0 543.3,708.7 543.4,707.5 543.5,706.2 543.6,705.0 543.7,703.7 543.9,702.4 544.0,701.1 544.1,699.8 544.3,698.5 544.4,697.2 544.5,695.8 544.7,694.5 544.8,693.2 544.9,691.8 545.0,690.5 545.1,689.1 545.3,687.7 545.4,686.3 545.5,684.9 545.7,683.5 545.8,682.1 546.0,680.7 546.1,679.2 546.2,677.7 546.4,676.3 546.6,674.8 546.7,673.3 546.9,671.7 547.0,670.2 547.2,668.6 547.4,667.1 547.6,665.5 547.7,663.9 547.9,662.3 548.1,660.7 548.3,659.1 548.4,657.4 548.6,655.7 548.8,654.1 549.0,652.4 549.2,650.6 549.4,648.9 549.6,647.2 549.8,645.4 550.1,643.6 550.3,641.8 550.5,640.0 550.7,638.1 551.0,636.2 551.2,634.3 551.5,632.4 551.7,630.5 552.0,628.5 552.2,626.6 552.5,624.6 552.8,622.5 553.1,620.5 553.3,618.4 553.6,616.3 553.9,614.2 554.2,612.0 554.5,609.9 554.8,607.6 555.2,605.4 555.5,603.2 555.8,600.9 556.1,598.6 556.5,596.2 556.8,593.8 557.2,591.4 557.5,589.0 557.9,586.5 558.2,584.0 558.6,581.5 558.9,579.0 559.3,576.4 559.6,573.8 560.0,571.1 560.4,568.5 560.7,565.7 561.1,563.0 561.5,560.1 561.9,557.3 562.3,554.4 562.7,551.5 563.1,548.5 563.5,545.4 563.9,542.4 564.4,539.2 564.8,536.0 565.3,532.8 565.7,529.5 566.1,526.2 566.6,522.8 567.0,519.3 567.5,515.8 567.9,512.3 568.4,508.6 568.8,504.9 569.3,501.1 569.8,497.3 570.2,493.4 570.7,489.4 571.2,485.3 571.6,481.2 572.1,476.9 572.6,472.6 573.1,468.2 573.5,463.7 574.0,459.0 574.5,454.3 574.9,449.5 575.4,444.6 575.9,439.5 576.4,434.3 576.8,429.0 577.3,423.6 577.7,418.0 578.1,412.3 578.5,406.4 578.9,400.4 579.3,394.2 579.6,387.9 579.9,381.3 580.2,374.6 580.5,367.7 580.8,360.6 581.0,353.3 581.2,345.7 581.4,337.9 581.6,329.8 581.7,321.5 582.0,312.7 582.3,303.6 582.6,294.2 582.9,284.4 583.2,274.2 583.6,263.7 584.0,252.7 584.5,241.3 585.0,229.3 585.7,216.9 586.6,203.8 587.6,190.2 588.9,175.9 590.4,160.8 592.3,145.0 594.6,128.2 597.3,110.5 600.6,91.7 604.5,71.8 609.1,50.5" fill="none" stroke="#000080" stroke-width="1"/>
<polyline points="600.5,749.0 600.6,748.1 600.7,747.2 600.8,746.2 600.9,745.3 601.0,744.3 601.1,743.4 601.3,742.4 601.4,741.5 601.5,740.5 601.6,739.5 601.8,738.5 601.9,737.5 602.0,736.5 602.2,735.5 602.3,734.5 602.5,733.5 602.6,732.5 602.8,731.4 602.9,730.4 603.1,729.3 603.2,728.3 603.4,727.2 603.6,726.1 603.7,725.0 603.9,723.9 604.1,722.8 604.3,721.7 604.4,720.6 604.6,719.5 604.9,718.3 605.1,717.2 605.3,716.0 605.5,714.8 605.8,713.6 606.0,712.4 606.2,711.2 606.5,710.0 606.7,708.7 607.0,707.5 607.2,706.2 607.5,705.0 607.8,703.7 608.0,702.4 608.3,701.1 608.6,699.8 608.9,698.5 609.2,697.2 609.5,695.8 609.8,694.5 610.0,693.2 610.3,691.8 610.6,690.5 610.9,689.1 611.2,687.7 611.5,686.3 611.8,684.9 612.1,683.5 612.4,682.1 612.7,680.7 613.1,679.2 613.4,677.7 613.8,676.3 614.1,674.8 614.5,673.3 614.8,671.7 615.2,670.2 615.5,668.6 615.9,667.1 616.3,665.5 616.7,663.9 617.1,662.3 617.5,660.7 617.9,659.1 618.3,657.4 618.7,655.7 619.1,654.1 619.6,652.4 620.0,650.6 620.5,648.9 620.9,647.2 621.4,645.4 621.9,643.6 622.4,641.8 622.9,640.0 623.4,638.1 623.9,636.2 624.4,634.3 624.9,632.4 625.5,630.5 626.0,628.5 626.6,626.6 627.2,624.6 627.7,622.5 628.3,620.5 629.0,618.4 629.6,616.3 630.2,614.2 630.9,612.0 631.5,609.9 632.2,607.6 632.9,605.4 633.6,603.2 634.3,600.9 635.0,598.6 635.7,596.2 636.5,593.8 637.3,591.4 638.1,589.0 638.9,586.5 639.6,584.0 640.4,581.5 641.2,579.0 642.1,576.4 642.9,573.8 643.8,571.1 644.7,568.5 645.6,565.7 646.5,563.0 647.4,560.1 648.4,557.3 649.4,554.4 650.4,551.5 651.4,548.5 652.5,545.4 653.6,542.4 654.7,539.2 655.8,536.0 656.9,532.8 658.1,529.5 659.3,526.2 660.5,522.8 661.0,521.4" fill="none" stroke="#000080" stroke-width="1"/>
<polyline points="61.0,81.0 92.0,50.0" fill="none" stroke="#ffffff" stroke-width="1"/>
<polyline points="61.0,141.0 152.0,50.0" fill="none" stroke="#ffffff" stroke-width="1"/>
<polyline points="61.0,201.0 212.0,50.0" fill="none" stroke="#ffffff" stroke-width="1"/>
<polyline points="61.0,261.0 272.0,50.0" fill="none" stroke="#ffffff" stroke-width="1"/>
<polyline points="61.0,321.0 332.0,50.0" fill="none" stroke="#ffffff" stroke-width="1"/>
<polyline points="61.0,381.0 392.0,50.0" fill="none" stroke="#ffffff" stroke-width="1"/>
<polyline points="61.0,441.0 452.0,50.0" fill="none" stroke="#ffffff" stroke-width="1"/>
<polyline points="61.0,501.0 512.0,50.0" fill="none" stroke="#ffffff" stroke-width="1"/>
<polyline points="61.0,561.0 572.0,50.0" fill="none" stroke="#ffffff" stroke-width="1"/>
<polyline points="61.0,621.0 632.0,50.0" fill="none" stroke="#ffffff" stroke-width="1"/>
<polyline points="61.0,681.0 661.0,81.0" fill="none" stroke="#ffffff" stroke-width="1"/>
<polyline points="61.0,741.0 661.0,141.0" fill="none" stroke="#ffffff" stroke-width="1"/>
<polyline points="113.0,749.0 661.0,201.0" fill="none" stroke="#ffffff" stroke-width="1"/>
<polyline points="173.0,749.0 661.0,261.0" fill="none" stroke="#ffffff" stroke-width="1"/>
<polyline points="233.0,749.0 661.0,321.0" fill="none" stroke="#ffffff" stroke-width="1"/>
<polyline points="293.0,749.0 661.0,381.0" fill="none" stroke="#ffffff" stroke-width="1"/>
<polyline points="353.0,749.0 661.0,441.0" fill="none" stroke="#ffffff" stroke-width="1"/>
<polyline points="413.0,749.0 661.0,501.0" fill="none" stroke="#ffffff" stroke-width="1"/>
<polyline points="473.0,749.0 661.0,561.0" fill="none" stroke="#ffffff" stroke-width="1"/>
<polyline points="533.0,749.0 661.0,621.0" fill="none" stroke="#ffffff" stroke-width="1"/>
<polyline points="593.0,749.0 661.0,681.0" fill="none" stroke="#ffffff" stroke-width="1"/>
<polyline points="653.0,749.0 661.0,741.0" fill="none" stroke="#ffffff" stroke-width="1"/>
<line x1="56" y1="50.5" x2="666" y2="50.5" stroke="#fff"/>
<line x1="56" y1="321.5" x2="666" y2="321.5" stroke="#fff"/>
<line x1="56" y1="449.5" x2="666" y2="449.5" stroke="#fff"/>
<line x1="56" y1="529.5" x2="666" y2="529.5" stroke="#fff"/>
<line x1="56" y1="586.5" x2="666" y2="586.5" stroke="#fff"/>
<line x1="56" y1="630.5" x2="666" y2="630.5" stroke="#fff"/>
<line x1="56" y1="665.5" x2="666" y2="665.5" stroke="#fff"/>
<line x1="56" y1="694.5" x2="666" y2="694.5" stroke="#fff"/>
<line x1="56" y1="719.5" x2="666" y2="719.5" stroke="#fff"/>
<line x1="56" y1="740.5" x2="666" y2="740.5" stroke="#fff"/>
<rect x="61.5" y="50.5" width="600" height="699" fill="none" stroke="#fff"/>
<line x1="61.5" y1="749" x2="61.5" y2="755" stroke="#fff"/>
</g>
<line x1="62" y1="692.5" x2="625" y2="692.5" stroke="#ff00ff" stroke-width="1.2" shape-rendering="crispEdges"/>
<rect x="625.5" y="683.5" width="31" height="17" fill="#000" stroke="#ff00ff"/>
<text x="641" y="697" font-family="Liberation Sans, sans-serif" font-size="13" fill="#ff00ff" text-anchor="middle">LCL</text>
<rect x="341.0" y="652.5" width="8" height="8" fill="#c8c800"/>
<text x="345.0" y="659.5" font-family="Liberation Sans, sans-serif" font-size="9" fill="#000" text-anchor="middle">3</text>
<rect x="248.5" y="680.0" width="8" height="8" fill="#c8c800"/>
<text x="252.5" y="687.0" font-family="Liberation Sans, sans-serif" font-size="9" fill="#000" text-anchor="middle">2</text>
<rect x="164.8" y="704.9" width="8" height="8" fill="#c8c800"/>
<text x="168.8" y="711.9" font-family="Liberation Sans, sans-serif" font-size="9" fill="#000" text-anchor="middle">1</text>
<g stroke-linejoin="round" shape-rendering="crispEdges">
<polyline points="462.5,51.0 443.7,115.0 433.1,163.4 426.8,197.1 422.5,245.5 421.5,321.5 423.5,342.1 426.3,365.2 429.8,388.5 437.3,424.2 441.5,449.1 448.3,477.8 458.4,523.2 468.5,572.1 470.2,584.1 476.9,644.7 479.5,675.0 482.0,693.5" fill="none" stroke="#ff00ff" stroke-width="1.0"/>
<polyline points="482.0,693.5 538.2,733.0" fill="none" stroke="#ff00ff" stroke-width="1.0"/>
<polyline points="482.0,693.5 458.7,733.0" fill="none" stroke="#ff00ff" stroke-width="1.0"/>
<polyline points="486.8,51.0 474.2,91.8 468.9,129.7 461.5,155.0 451.0,228.5 447.9,260.0 448.9,300.0 451.0,335.5 458.2,388.8 464.7,430.5 469.3,442.4 471.9,464.3 478.6,501.3 483.7,538.4 488.7,578.8 488.7,585.8 490.4,611.0 492.9,644.7 493.0,672.5 500.0,678.1 508.3,683.5 526.5,696.1 543.1,708.6 561.2,719.8 577.9,733.0" fill="none" stroke="#ffb0ff" stroke-width="1.0"/>
<polyline points="481.9,693.0 493.0,672.5" fill="none" stroke="#ffb0ff" stroke-width="1.0"/>
<polyline points="138.0,51.0 126.8,59.8 120.1,67.6 113.1,77.1 165.1,108.0 166.2,112.2 186.4,125.9 174.8,137.1 147.9,156.0 143.2,159.8 196.9,175.0 230.6,183.8 224.7,185.9 203.7,205.9 232.1,213.1 253.8,218.9 328.9,232.6 311.0,244.8 304.7,250.0 428.9,264.2 428.9,276.8 428.9,286.3 422.6,291.5 411.0,301.0 383.7,321.5 368.9,325.2 362.6,328.4 328.9,342.7 327.9,357.9 327.9,364.6 325.8,395.1 300.5,421.0 280.5,441.1 274.6,442.2 263.0,455.7 251.5,465.8 245.8,470.0 233.8,482.2 227.9,486.8 228.5,495.2 230.0,502.2 238.0,519.0 238.4,525.1 239.5,530.5 250.6,537.3 251.0,540.9 261.8,548.7 267.2,552.1 273.9,555.8 280.0,561.8 286.1,564.8 238.5,570.0 264.7,572.5 292.0,577.9 254.1,586.8 235.2,597.8 262.2,602.8 233.0,609.6 209.5,616.0 219.6,618.8 254.1,628.6 229.7,637.0 215.0,639.9 152.0,665.5 173.2,682.9 134.0,692.5 160.1,699.8 246.5,707.8 215.0,713.1 206.8,720.1 225.5,724.8 209.2,727.2 211.5,733.0" fill="none" stroke="#ff0080" stroke-width="1.0"/>
<polyline points="235.2,51.0 224.3,59.8 212.1,67.6 199.9,77.1 307.9,107.6 308.5,112.2 319.9,125.9 307.9,137.1 277.3,156.0 272.1,159.8 338.0,175.0 374.2,183.8 367.9,185.9 343.7,205.9 374.2,213.3 398.4,219.2 470.0,232.6 451.4,244.8 445.9,249.9 566.0,265.0 566.0,276.8 566.0,285.2 565.1,286.9 560.1,290.8 548.3,300.9 518.0,322.0 506.2,324.5 500.3,327.8 470.0,342.5 470.0,357.7 470.0,364.7 470.0,395.1 433.1,430.5 422.2,441.0 416.3,442.1 403.7,455.9 391.9,465.6 386.0,469.3 373.3,482.0 368.3,487.0 368.3,494.6 368.3,502.2 373.8,519.0 374.2,524.6 386.0,536.7 386.0,540.9 398.6,548.5 403.7,551.9 409.5,555.2 416.3,561.1 422.2,564.1 373.3,569.8 397.8,572.6 422.2,577.8 374.2,586.9 343.9,597.5 397.8,602.6 368.3,609.7 343.9,615.7 348.9,618.6 374.2,628.7 343.9,636.3 325.7,639.9 212.1,665.7 174.0,682.1 132.3,693.8 121.9,698.4 106.8,703.6 92.9,707.7 109.1,707.7 62.8,719.8 86.0,725.6 62.8,732.5" fill="none" stroke="#00ff00" stroke-width="1.0"/>
<polyline points="660.5,84.5 645.8,99.2 636.9,108.0 633.1,111.8 627.9,125.9 613.8,136.8 608.5,156.0 605.8,159.8 595.9,175.0 580.5,183.8 576.9,185.9 565.8,205.9 561.5,213.3 554.8,219.2 545.8,225.5 538.0,232.5 531.8,244.7 524.7,249.9 501.1,265.0 497.8,276.8 483.4,285.2 477.6,290.8 448.9,300.9 433.1,321.5 426.8,326.3 423.7,331.5 422.6,342.7 420.5,357.9 421.1,364.6 422.2,395.1 426.8,430.5 428.1,441.5 431.5,455.9 433.1,465.6 430.6,469.3 433.1,482.0 434.8,488.7 435.7,494.6 436.5,502.2 442.4,519.0 446.6,524.6 449.1,530.0 451.3,536.7 448.3,540.9 439.9,548.8 437.3,552.2 439.9,555.2 441.5,561.1 442.4,565.3 442.4,572.1 443.2,578.0 448.3,590.8 450.0,603.5 455.0,609.8 460.9,616.1 461.8,618.6 464.3,628.7 466.5,638.8 480.3,658.2 487.5,665.5 501.4,682.2 508.3,697.5 509.7,705.9 516.7,712.8 524.3,721.9 519.4,727.4 527.8,733.0" fill="none" stroke="#ff0000" stroke-width="1.0"/>
<polyline points="537.3,51.0 525.3,59.8 516.9,67.6 507.9,77.1 499.5,84.5 483.7,99.2 474.8,108.0 470.6,112.2 459.5,125.9 452.1,137.1 434.8,156.0 432.1,159.8 415.9,175.0 409.5,185.5 388.5,205.9 382.2,213.3 374.8,219.2 363.7,232.7 351.0,245.0 346.8,250.0 326.8,264.2 323.7,276.8 363.7,284.8 366.8,286.9 375.9,291.1 372.1,301.0 385.8,321.5 383.7,328.4 386.8,342.7 390.0,357.9 390.6,364.6 385.8,395.1 384.7,430.5 384.6,441.0 380.9,442.1 369.1,450.0 365.8,455.9 379.2,465.6 386.0,469.3 394.4,469.3 391.9,482.0 403.7,488.7 409.5,494.6 410.9,502.2 412.9,519.0 399.5,524.6 405.3,530.0 402.8,536.7 412.9,540.9 398.6,548.8 386.0,552.2 434.8,555.2 441.5,561.1 442.4,565.3 442.4,572.1 443.2,578.0 448.3,590.8 450.8,598.4 450.0,603.5 444.1,609.8 452.5,616.1 455.0,618.6 463.5,628.7 444.1,638.0 444.7,653.4 444.7,666.9 436.5,683.8 432.9,690.9 431.2,698.5 455.2,706.1 452.3,713.1 452.9,721.9 473.9,726.0 481.9,728.1" fill="none" stroke="#00ffff" stroke-width="1.0"/>
<polyline points="62.5,640.5 81.5,654.2 97.3,666.0 121.3,681.5 163.0,684.4 206.9,688.8 260.5,692.5" fill="none" stroke="#e07000" stroke-width="1.0"/>
<polyline points="62.0,697.6 160.1,695.4 240.5,694.5" fill="none" stroke="#e07000" stroke-width="1.0"/>
<polyline points="62.0,699.0 138.1,701.2 260.5,705.6 291.5,706.4 309.1,707.1 313.5,707.8 328.8,713.0 331.8,717.4 332.5,722.5 348.6,722.5" fill="none" stroke="#e07000" stroke-width="1.0"/>
<polyline points="250.5,728.3 276.9,725.4 332.5,723.9" fill="none" stroke="#e07000" stroke-width="1.0"/>
<polyline points="62.6,641.0 66.5,652.5 69.5,664.7 69.0,672.5 67.9,680.5 64.5,684.5 62.6,690.0" fill="none" stroke="#ffff00" stroke-width="1.0"/>
<polyline points="62.0,698.3 107.4,705.6 92.7,707.8 111.7,720.3 148.3,723.9 260.5,724.7 328.1,725.8 370.5,725.8 386.7,726.1 411.5,727.6 426.2,728.3 434.2,728.3 436.5,732.7" fill="none" stroke="#ffff00" stroke-width="1.0"/>
<polyline points="345.0,656.5 308.1,666.3 264.3,681.8 252.5,684.0 247.9,685.1 190.8,692.5 189.3,697.6 183.5,699.1 152.0,705.6 168.8,708.9 173.2,713.0 206.9,719.5 192.3,727.6 211.3,731.5" fill="none" stroke="#c8c800" stroke-width="1.0"/>
</g>
<path d="M634,108.5h2M637,108.5h2M636.5,106v2M636.5,109v2M631,111.5h2M634,111.5h2M633.5,109v2M633.5,112v2M625,125.5h2M628,125.5h2M627.5,123v2M627.5,126v2M611,136.5h2M614,136.5h2M613.5,134v2M613.5,137v2M606,156.5h2M609,156.5h2M608.5,154v2M608.5,157v2M603,159.5h2M606,159.5h2M605.5,157v2M605.5,160v2M593,174.5h2M596,174.5h2M595.5,172v2M595.5,175v2M578,183.5h2M581,183.5h2M580.5,181v2M580.5,184v2M574,185.5h2M577,185.5h2M576.5,183v2M576.5,186v2M563,205.5h2M566,205.5h2M565.5,203v2M565.5,206v2M559,213.5h2M562,213.5h2M561.5,211v2M561.5,214v2M552,219.5h2M555,219.5h2M554.5,217v2M554.5,220v2M536,232.5h2M539,232.5h2M538.5,230v2M538.5,233v2M529,244.5h2M532,244.5h2M531.5,242v2M531.5,245v2M522,249.5h2M525,249.5h2M524.5,247v2M524.5,250v2M499,264.5h2M502,264.5h2M501.5,262v2M501.5,265v2M495,276.5h2M498,276.5h2M497.5,274v2M497.5,277v2M481,285.5h2M484,285.5h2M483.5,283v2M483.5,286v2M475,290.5h2M478,290.5h2M477.5,288v2M477.5,291v2M446,300.5h2M449,300.5h2M448.5,298v2M448.5,301v2M431,321.5h2M434,321.5h2M433.5,319v2M433.5,322v2M424,326.5h2M427,326.5h2M426.5,324v2M426.5,327v2M420,342.5h2M423,342.5h2M422.5,340v2M422.5,343v2M418,357.5h2M421,357.5h2M420.5,355v2M420.5,358v2M419,364.5h2M422,364.5h2M421.5,362v2M421.5,365v2M420,395.5h2M423,395.5h2M422.5,393v2M422.5,396v2M426,441.5h2M429,441.5h2M428.5,439v2M428.5,442v2M429,455.5h2M432,455.5h2M431.5,453v2M431.5,456v2M431,465.5h2M434,465.5h2M433.5,463v2M433.5,466v2M428,469.5h2M431,469.5h2M430.5,467v2M430.5,470v2M431,482.5h2M434,482.5h2M433.5,480v2M433.5,483v2M432,488.5h2M435,488.5h2M434.5,486v2M434.5,489v2M433,494.5h2M436,494.5h2M435.5,492v2M435.5,495v2M434,502.5h2M437,502.5h2M436.5,500v2M436.5,503v2M440,518.5h2M443,518.5h2M442.5,516v2M442.5,519v2M444,524.5h2M447,524.5h2M446.5,522v2M446.5,525v2M447,530.5h2M450,530.5h2M449.5,528v2M449.5,531v2M449,536.5h2M452,536.5h2M451.5,534v2M451.5,537v2M446,540.5h2M449,540.5h2M448.5,538v2M448.5,541v2M437,548.5h2M440,548.5h2M439.5,546v2M439.5,549v2M435,552.5h2M438,552.5h2M437.5,550v2M437.5,553v2M437,555.5h2M440,555.5h2M439.5,553v2M439.5,556v2M439,561.5h2M442,561.5h2M441.5,559v2M441.5,562v2M440,565.5h2M443,565.5h2M442.5,563v2M442.5,566v2M440,572.5h2M443,572.5h2M442.5,570v2M442.5,573v2M441,578.5h2M444,578.5h2M443.5,576v2M443.5,579v2M448,603.5h2M451,603.5h2M450.5,601v2M450.5,604v2M452,609.5h2M455,609.5h2M454.5,607v2M454.5,610v2M458,616.5h2M461,616.5h2M460.5,614v2M460.5,617v2M459,618.5h2M462,618.5h2M461.5,616v2M461.5,619v2M462,628.5h2M465,628.5h2M464.5,626v2M464.5,629v2M464,638.5h2M467,638.5h2M466.5,636v2M466.5,639v2M485,665.5h2M488,665.5h2M487.5,663v2M487.5,666v2M499,682.5h2M502,682.5h2M501.5,680v2M501.5,683v2M506,697.5h2M509,697.5h2M508.5,695v2M508.5,698v2M507,705.5h2M510,705.5h2M509.5,703v2M509.5,706v2M514,712.5h2M517,712.5h2M516.5,710v2M516.5,713v2M522,721.5h2M525,721.5h2M524.5,719v2M524.5,722v2M517,727.5h2M520,727.5h2M519.5,725v2M519.5,728v2M525,732.5h2M528,732.5h2M527.5,730v2M527.5,733v2M523,59.5h2M526,59.5h2M525.5,57v2M525.5,60v2M514,67.5h2M517,67.5h2M516.5,65v2M516.5,68v2M505,77.5h2M508,77.5h2M507.5,75v2M507.5,78v2M472,108.5h2M475,108.5h2M474.5,106v2M474.5,109v2M468,112.5h2M471,112.5h2M470.5,110v2M470.5,113v2M457,125.5h2M460,125.5h2M459.5,123v2M459.5,126v2M450,137.5h2M453,137.5h2M452.5,135v2M452.5,138v2M432,156.5h2M435,156.5h2M434.5,154v2M434.5,157v2M430,159.5h2M433,159.5h2M432.5,157v2M432.5,160v2M413,174.5h2M416,174.5h2M415.5,172v2M415.5,175v2M407,185.5h2M410,185.5h2M409.5,183v2M409.5,186v2M386,205.5h2M389,205.5h2M388.5,203v2M388.5,206v2M380,213.5h2M383,213.5h2M382.5,211v2M382.5,214v2M372,219.5h2M375,219.5h2M374.5,217v2M374.5,220v2M361,232.5h2M364,232.5h2M363.5,230v2M363.5,233v2M348,244.5h2M351,244.5h2M350.5,242v2M350.5,245v2M344,250.5h2M347,250.5h2M346.5,248v2M346.5,251v2M324,264.5h2M327,264.5h2M326.5,262v2M326.5,265v2M321,276.5h2M324,276.5h2M323.5,274v2M323.5,277v2M361,284.5h2M364,284.5h2M363.5,282v2M363.5,285v2M364,286.5h2M367,286.5h2M366.5,284v2M366.5,287v2M373,291.5h2M376,291.5h2M375.5,289v2M375.5,292v2M370,300.5h2M373,300.5h2M372.5,298v2M372.5,301v2M383,321.5h2M386,321.5h2M385.5,319v2M385.5,322v2M381,328.5h2M384,328.5h2M383.5,326v2M383.5,329v2M384,342.5h2M387,342.5h2M386.5,340v2M386.5,343v2M388,357.5h2M391,357.5h2M390.5,355v2M390.5,358v2M388,364.5h2M391,364.5h2M390.5,362v2M390.5,365v2M383,395.5h2M386,395.5h2M385.5,393v2M385.5,396v2M382,440.5h2M385,440.5h2M384.5,438v2M384.5,441v2M378,442.5h2M381,442.5h2M380.5,440v2M380.5,443v2M367,450.5h2M370,450.5h2M369.5,448v2M369.5,451v2M363,455.5h2M366,455.5h2M365.5,453v2M365.5,456v2M377,465.5h2M380,465.5h2M379.5,463v2M379.5,466v2M384,469.5h2M387,469.5h2M386.5,467v2M386.5,470v2M392,469.5h2M395,469.5h2M394.5,467v2M394.5,470v2M389,482.5h2M392,482.5h2M391.5,480v2M391.5,483v2M401,488.5h2M404,488.5h2M403.5,486v2M403.5,489v2M407,494.5h2M410,494.5h2M409.5,492v2M409.5,495v2M408,502.5h2M411,502.5h2M410.5,500v2M410.5,503v2M410,518.5h2M413,518.5h2M412.5,516v2M412.5,519v2M397,524.5h2M400,524.5h2M399.5,522v2M399.5,525v2M403,530.5h2M406,530.5h2M405.5,528v2M405.5,531v2M400,536.5h2M403,536.5h2M402.5,534v2M402.5,537v2M410,540.5h2M413,540.5h2M412.5,538v2M412.5,541v2M396,548.5h2M399,548.5h2M398.5,546v2M398.5,549v2M384,552.5h2M387,552.5h2M386.5,550v2M386.5,553v2M432,555.5h2M435,555.5h2M434.5,553v2M434.5,556v2M439,561.5h2M442,561.5h2M441.5,559v2M441.5,562v2M440,565.5h2M443,565.5h2M442.5,563v2M442.5,566v2M440,572.5h2M443,572.5h2M442.5,570v2M442.5,573v2M441,578.5h2M444,578.5h2M443.5,576v2M443.5,579v2M448,598.5h2M451,598.5h2M450.5,596v2M450.5,599v2M448,603.5h2M451,603.5h2M450.5,601v2M450.5,604v2M442,609.5h2M445,609.5h2M444.5,607v2M444.5,610v2M450,616.5h2M453,616.5h2M452.5,614v2M452.5,617v2M452,618.5h2M455,618.5h2M454.5,616v2M454.5,619v2M461,628.5h2M464,628.5h2M463.5,626v2M463.5,629v2M442,638.5h2M445,638.5h2M444.5,636v2M444.5,639v2M442,666.5h2M445,666.5h2M444.5,664v2M444.5,667v2M434,683.5h2M437,683.5h2M436.5,681v2M436.5,684v2M429,698.5h2M432,698.5h2M431.5,696v2M431.5,699v2M453,706.5h2M456,706.5h2M455.5,704v2M455.5,707v2M450,713.5h2M453,713.5h2M452.5,711v2M452.5,714v2M450,721.5h2M453,721.5h2M452.5,719v2M452.5,722v2M471,726.5h2M474,726.5h2M473.5,724v2M473.5,727v2M479,728.5h2M482,728.5h2M481.5,726v2M481.5,729v2M222,59.5h2M225,59.5h2M224.5,57v2M224.5,60v2M210,67.5h2M213,67.5h2M212.5,65v2M212.5,68v2M197,77.5h2M200,77.5h2M199.5,75v2M199.5,78v2M305,107.5h2M308,107.5h2M307.5,105v2M307.5,108v2M306,112.5h2M309,112.5h2M308.5,110v2M308.5,113v2M317,125.5h2M320,125.5h2M319.5,123v2M319.5,126v2M305,137.5h2M308,137.5h2M307.5,135v2M307.5,138v2M275,156.5h2M278,156.5h2M277.5,154v2M277.5,157v2M270,159.5h2M273,159.5h2M272.5,157v2M272.5,160v2M336,174.5h2M339,174.5h2M338.5,172v2M338.5,175v2M372,183.5h2M375,183.5h2M374.5,181v2M374.5,184v2M365,185.5h2M368,185.5h2M367.5,183v2M367.5,186v2M341,205.5h2M344,205.5h2M343.5,203v2M343.5,206v2M372,213.5h2M375,213.5h2M374.5,211v2M374.5,214v2M396,219.5h2M399,219.5h2M398.5,217v2M398.5,220v2M468,232.5h2M471,232.5h2M470.5,230v2M470.5,233v2M449,244.5h2M452,244.5h2M451.5,242v2M451.5,245v2M443,249.5h2M446,249.5h2M445.5,247v2M445.5,250v2M564,264.5h2M567,264.5h2M566.5,262v2M566.5,265v2M564,276.5h2M567,276.5h2M566.5,274v2M566.5,277v2M564,285.5h2M567,285.5h2M566.5,283v2M566.5,286v2M563,286.5h2M566,286.5h2M565.5,284v2M565.5,287v2M558,290.5h2M561,290.5h2M560.5,288v2M560.5,291v2M546,300.5h2M549,300.5h2M548.5,298v2M548.5,301v2M516,322.5h2M519,322.5h2M518.5,320v2M518.5,323v2M504,324.5h2M507,324.5h2M506.5,322v2M506.5,325v2M498,327.5h2M501,327.5h2M500.5,325v2M500.5,328v2M468,342.5h2M471,342.5h2M470.5,340v2M470.5,343v2M468,357.5h2M471,357.5h2M470.5,355v2M470.5,358v2M468,364.5h2M471,364.5h2M470.5,362v2M470.5,365v2M468,395.5h2M471,395.5h2M470.5,393v2M470.5,396v2M420,440.5h2M423,440.5h2M422.5,438v2M422.5,441v2M414,442.5h2M417,442.5h2M416.5,440v2M416.5,443v2M401,455.5h2M404,455.5h2M403.5,453v2M403.5,456v2M389,465.5h2M392,465.5h2M391.5,463v2M391.5,466v2M384,469.5h2M387,469.5h2M386.5,467v2M386.5,470v2M371,482.5h2M374,482.5h2M373.5,480v2M373.5,483v2M366,486.5h2M369,486.5h2M368.5,484v2M368.5,487v2M366,494.5h2M369,494.5h2M368.5,492v2M368.5,495v2M366,502.5h2M369,502.5h2M368.5,500v2M368.5,503v2M371,518.5h2M374,518.5h2M373.5,516v2M373.5,519v2M372,524.5h2M375,524.5h2M374.5,522v2M374.5,525v2M384,536.5h2M387,536.5h2M386.5,534v2M386.5,537v2M384,540.5h2M387,540.5h2M386.5,538v2M386.5,541v2M396,548.5h2M399,548.5h2M398.5,546v2M398.5,549v2M401,551.5h2M404,551.5h2M403.5,549v2M403.5,552v2M407,555.5h2M410,555.5h2M409.5,553v2M409.5,556v2M414,561.5h2M417,561.5h2M416.5,559v2M416.5,562v2M420,564.5h2M423,564.5h2M422.5,562v2M422.5,565v2M371,569.5h2M374,569.5h2M373.5,567v2M373.5,570v2M395,572.5h2M398,572.5h2M397.5,570v2M397.5,573v2M420,577.5h2M423,577.5h2M422.5,575v2M422.5,578v2M372,586.5h2M375,586.5h2M374.5,584v2M374.5,587v2M341,597.5h2M344,597.5h2M343.5,595v2M343.5,598v2M395,602.5h2M398,602.5h2M397.5,600v2M397.5,603v2M366,609.5h2M369,609.5h2M368.5,607v2M368.5,610v2M341,615.5h2M344,615.5h2M343.5,613v2M343.5,616v2M346,618.5h2M349,618.5h2M348.5,616v2M348.5,619v2M372,628.5h2M375,628.5h2M374.5,626v2M374.5,629v2M341,636.5h2M344,636.5h2M343.5,634v2M343.5,637v2M323,639.5h2M326,639.5h2M325.5,637v2M325.5,640v2M210,665.5h2M213,665.5h2M212.5,663v2M212.5,666v2M172,682.5h2M175,682.5h2M174.5,680v2M174.5,683v2M130,693.5h2M133,693.5h2M132.5,691v2M132.5,694v2M119,698.5h2M122,698.5h2M121.5,696v2M121.5,699v2M90,707.5h2M93,707.5h2M92.5,705v2M92.5,708v2M107,707.5h2M110,707.5h2M109.5,705v2M109.5,708v2M60,719.5h2M63,719.5h2M62.5,717v2M62.5,720v2M84,725.5h2M87,725.5h2M86.5,723v2M86.5,726v2M60,732.5h2M63,732.5h2M62.5,730v2M62.5,733v2M124,59.5h2M127,59.5h2M126.5,57v2M126.5,60v2M118,67.5h2M121,67.5h2M120.5,65v2M120.5,68v2M111,77.5h2M114,77.5h2M113.5,75v2M113.5,78v2M163,108.5h2M166,108.5h2M165.5,106v2M165.5,109v2M164,112.5h2M167,112.5h2M166.5,110v2M166.5,113v2M184,125.5h2M187,125.5h2M186.5,123v2M186.5,126v2M172,137.5h2M175,137.5h2M174.5,135v2M174.5,138v2M145,156.5h2M148,156.5h2M147.5,154v2M147.5,157v2M141,159.5h2M144,159.5h2M143.5,157v2M143.5,160v2M194,174.5h2M197,174.5h2M196.5,172v2M196.5,175v2M228,183.5h2M231,183.5h2M230.5,181v2M230.5,184v2M222,185.5h2M225,185.5h2M224.5,183v2M224.5,186v2M201,205.5h2M204,205.5h2M203.5,203v2M203.5,206v2M230,213.5h2M233,213.5h2M232.5,211v2M232.5,214v2M251,218.5h2M254,218.5h2M253.5,216v2M253.5,219v2M326,232.5h2M329,232.5h2M328.5,230v2M328.5,233v2M308,244.5h2M311,244.5h2M310.5,242v2M310.5,245v2M302,250.5h2M305,250.5h2M304.5,248v2M304.5,251v2M426,264.5h2M429,264.5h2M428.5,262v2M428.5,265v2M426,276.5h2M429,276.5h2M428.5,274v2M428.5,277v2M426,286.5h2M429,286.5h2M428.5,284v2M428.5,287v2M420,291.5h2M423,291.5h2M422.5,289v2M422.5,292v2M408,300.5h2M411,300.5h2M410.5,298v2M410.5,301v2M381,321.5h2M384,321.5h2M383.5,319v2M383.5,322v2M366,325.5h2M369,325.5h2M368.5,323v2M368.5,326v2M360,328.5h2M363,328.5h2M362.5,326v2M362.5,329v2M326,342.5h2M329,342.5h2M328.5,340v2M328.5,343v2M325,357.5h2M328,357.5h2M327.5,355v2M327.5,358v2M325,364.5h2M328,364.5h2M327.5,362v2M327.5,365v2M323,395.5h2M326,395.5h2M325.5,393v2M325.5,396v2M278,441.5h2M281,441.5h2M280.5,439v2M280.5,442v2M272,442.5h2M275,442.5h2M274.5,440v2M274.5,443v2M260,455.5h2M263,455.5h2M262.5,453v2M262.5,456v2M249,465.5h2M252,465.5h2M251.5,463v2M251.5,466v2M243,470.5h2M246,470.5h2M245.5,468v2M245.5,471v2M231,482.5h2M234,482.5h2M233.5,480v2M233.5,483v2M225,486.5h2M228,486.5h2M227.5,484v2M227.5,487v2M226,495.5h2M229,495.5h2M228.5,493v2M228.5,496v2M228,502.5h2M231,502.5h2M230.5,500v2M230.5,503v2M236,518.5h2M239,518.5h2M238.5,516v2M238.5,519v2M236,525.5h2M239,525.5h2M238.5,523v2M238.5,526v2M237,530.5h2M240,530.5h2M239.5,528v2M239.5,531v2M248,537.5h2M251,537.5h2M250.5,535v2M250.5,538v2M248,540.5h2M251,540.5h2M250.5,538v2M250.5,541v2M259,548.5h2M262,548.5h2M261.5,546v2M261.5,549v2M265,552.5h2M268,552.5h2M267.5,550v2M267.5,553v2M271,555.5h2M274,555.5h2M273.5,553v2M273.5,556v2M278,561.5h2M281,561.5h2M280.5,559v2M280.5,562v2M284,564.5h2M287,564.5h2M286.5,562v2M286.5,565v2M236,570.5h2M239,570.5h2M238.5,568v2M238.5,571v2M262,572.5h2M265,572.5h2M264.5,570v2M264.5,573v2M290,577.5h2M293,577.5h2M292.5,575v2M292.5,578v2M252,586.5h2M255,586.5h2M254.5,584v2M254.5,587v2M233,597.5h2M236,597.5h2M235.5,595v2M235.5,598v2M260,602.5h2M263,602.5h2M262.5,600v2M262.5,603v2M230,609.5h2M233,609.5h2M232.5,607v2M232.5,610v2M207,616.5h2M210,616.5h2M209.5,614v2M209.5,617v2M217,618.5h2M220,618.5h2M219.5,616v2M219.5,619v2M252,628.5h2M255,628.5h2M254.5,626v2M254.5,629v2M227,636.5h2M230,636.5h2M229.5,634v2M229.5,637v2M212,639.5h2M215,639.5h2M214.5,637v2M214.5,640v2M150,665.5h2M153,665.5h2M152.5,663v2M152.5,666v2M171,682.5h2M174,682.5h2M173.5,680v2M173.5,683v2M132,692.5h2M135,692.5h2M134.5,690v2M134.5,693v2M244,707.5h2M247,707.5h2M246.5,705v2M246.5,708v2M212,713.5h2M215,713.5h2M214.5,711v2M214.5,714v2M204,720.5h2M207,720.5h2M206.5,718v2M206.5,721v2M223,724.5h2M226,724.5h2M225.5,722v2M225.5,725v2M207,727.5h2M210,727.5h2M209.5,725v2M209.5,728v2M209,732.5h2M212,732.5h2M211.5,730v2M211.5,733v2M306,666.5h2M309,666.5h2M308.5,664v2M308.5,667v2M262,681.5h2M265,681.5h2M264.5,679v2M264.5,682v2M250,684.5h2M253,684.5h2M252.5,682v2M252.5,685v2M245,685.5h2M248,685.5h2M247.5,683v2M247.5,686v2M188,692.5h2M191,692.5h2M190.5,690v2M190.5,693v2M187,697.5h2M190,697.5h2M189.5,695v2M189.5,698v2M181,699.5h2M184,699.5h2M183.5,697v2M183.5,700v2M150,705.5h2M153,705.5h2M152.5,703v2M152.5,706v2M166,708.5h2M169,708.5h2M168.5,706v2M168.5,709v2M171,712.5h2M174,712.5h2M173.5,710v2M173.5,713v2M204,719.5h2M207,719.5h2M206.5,717v2M206.5,720v2M190,727.5h2M193,727.5h2M192.5,725v2M192.5,728v2M209,731.5h2M212,731.5h2M211.5,729v2M211.5,732v2M105,705.5h2M108,705.5h2M107.5,703v2M107.5,706v2M90,707.5h2M93,707.5h2M92.5,705v2M92.5,708v2M109,720.5h2M112,720.5h2M111.5,718v2M111.5,721v2M146,723.5h2M149,723.5h2M148.5,721v2M148.5,724v2M258,724.5h2M261,724.5h2M260.5,722v2M260.5,725v2M326,725.5h2M329,725.5h2M328.5,723v2M328.5,726v2M368,725.5h2M371,725.5h2M370.5,723v2M370.5,726v2M384,726.5h2M387,726.5h2M386.5,724v2M386.5,727v2M409,727.5h2M412,727.5h2M411.5,725v2M411.5,728v2M424,728.5h2M427,728.5h2M426.5,726v2M426.5,729v2M432,728.5h2M435,728.5h2M434.5,726v2M434.5,729v2M434,732.5h2M437,732.5h2M436.5,730v2M436.5,733v2M258,705.5h2M261,705.5h2M260.5,703v2M260.5,706v2M289,706.5h2M292,706.5h2M291.5,704v2M291.5,707v2M307,707.5h2M310,707.5h2M309.5,705v2M309.5,708v2M311,707.5h2M314,707.5h2M313.5,705v2M313.5,708v2M326,712.5h2M329,712.5h2M328.5,710v2M328.5,713v2M330,722.5h2M333,722.5h2M332.5,720v2M332.5,723v2M346,722.5h2M349,722.5h2M348.5,720v2M348.5,723v2" stroke="#fff" stroke-width="1" fill="none" shape-rendering="crispEdges"/>
<text x="53" y="55" font-family="Liberation Sans, sans-serif" font-size="13" fill="#fff" text-anchor="end" textLength="20.0" lengthAdjust="spacingAndGlyphs">100</text>
<text x="53" y="326" font-family="Liberation Sans, sans-serif" font-size="13" fill="#fff" text-anchor="end" textLength="20.0" lengthAdjust="spacingAndGlyphs">200</text>
<text x="53" y="454" font-family="Liberation Sans, sans-serif" font-size="13" fill="#fff" text-anchor="end" textLength="20.0" lengthAdjust="spacingAndGlyphs">300</text>
<text x="53" y="534" font-family="Liberation Sans, sans-serif" font-size="13" fill="#fff" text-anchor="end" textLength="20.0" lengthAdjust="spacingAndGlyphs">400</text>
<text x="53" y="591" font-family="Liberation Sans, sans-serif" font-size="13" fill="#fff" text-anchor="end" textLength="20.0" lengthAdjust="spacingAndGlyphs">500</text>
<text x="53" y="635" font-family="Liberation Sans, sans-serif" font-size="13" fill="#fff" text-anchor="end" textLength="20.0" lengthAdjust="spacingAndGlyphs">600</text>
<text x="53" y="670" font-family="Liberation Sans, sans-serif" font-size="13" fill="#fff" text-anchor="end" textLength="20.0" lengthAdjust="spacingAndGlyphs">700</text>
<text x="53" y="699" font-family="Liberation Sans, sans-serif" font-size="13" fill="#fff" text-anchor="end" textLength="20.0" lengthAdjust="spacingAndGlyphs">800</text>
<text x="53" y="724" font-family="Liberation Sans, sans-serif" font-size="13" fill="#fff" text-anchor="end" textLength="20.0" lengthAdjust="spacingAndGlyphs">900</text>
<text x="53" y="745" font-family="Liberation Sans, sans-serif" font-size="13" fill="#fff" text-anchor="end" textLength="26.6" lengthAdjust="spacingAndGlyphs">1000</text>
<text x="670.5" y="55" font-family="Liberation Sans, sans-serif" font-size="13" fill="#fff" textLength="44.2" lengthAdjust="spacingAndGlyphs">16650m</text>
<text x="670.5" y="326" font-family="Liberation Sans, sans-serif" font-size="13" fill="#fff" textLength="44.2" lengthAdjust="spacingAndGlyphs">12260m</text>
<text x="670.5" y="454" font-family="Liberation Sans, sans-serif" font-size="13" fill="#fff" textLength="37.6" lengthAdjust="spacingAndGlyphs">9600m</text>
<text x="670.5" y="534" font-family="Liberation Sans, sans-serif" font-size="13" fill="#fff" textLength="37.6" lengthAdjust="spacingAndGlyphs">7540m</text>
<text x="670.5" y="591" font-family="Liberation Sans, sans-serif" font-size="13" fill="#fff" textLength="37.6" lengthAdjust="spacingAndGlyphs">5870m</text>
<text x="670.5" y="635" font-family="Liberation Sans, sans-serif" font-size="13" fill="#fff" textLength="37.6" lengthAdjust="spacingAndGlyphs">4415m</text>
<text x="670.5" y="670" font-family="Liberation Sans, sans-serif" font-size="13" fill="#fff" textLength="37.6" lengthAdjust="spacingAndGlyphs">3185m</text>
<text x="670.5" y="699" font-family="Liberation Sans, sans-serif" font-size="13" fill="#fff" textLength="37.6" lengthAdjust="spacingAndGlyphs">2056m</text>
<text x="670.5" y="724" font-family="Liberation Sans, sans-serif" font-size="13" fill="#fff" textLength="37.6" lengthAdjust="spacingAndGlyphs">1046m</text>
<text x="61.5" y="767.5" font-family="Liberation Sans, sans-serif" font-size="13" fill="#fff" text-anchor="middle" textLength="17.1" lengthAdjust="spacingAndGlyphs">-50</text>
<text x="121.5" y="767.5" font-family="Liberation Sans, sans-serif" font-size="13" fill="#fff" text-anchor="middle" textLength="17.1" lengthAdjust="spacingAndGlyphs">-40</text>
<text x="181.5" y="767.5" font-family="Liberation Sans, sans-serif" font-size="13" fill="#fff" text-anchor="middle" textLength="17.1" lengthAdjust="spacingAndGlyphs">-30</text>
<text x="241.5" y="767.5" font-family="Liberation Sans, sans-serif" font-size="13" fill="#fff" text-anchor="middle" textLength="17.1" lengthAdjust="spacingAndGlyphs">-20</text>
<text x="301.5" y="767.5" font-family="Liberation Sans, sans-serif" font-size="13" fill="#fff" text-anchor="middle" textLength="17.1" lengthAdjust="spacingAndGlyphs">-10</text>
<text x="361.5" y="767.5" font-family="Liberation Sans, sans-serif" font-size="13" fill="#fff" text-anchor="middle" textLength="6.7" lengthAdjust="spacingAndGlyphs">0</text>
<text x="421.5" y="767.5" font-family="Liberation Sans, sans-serif" font-size="13" fill="#fff" text-anchor="middle" textLength="13.3" lengthAdjust="spacingAndGlyphs">10</text>
<text x="481.5" y="767.5" font-family="Liberation Sans, sans-serif" font-size="13" fill="#fff" text-anchor="middle" textLength="13.3" lengthAdjust="spacingAndGlyphs">20</text>
<text x="541.5" y="767.5" font-family="Liberation Sans, sans-serif" font-size="13" fill="#fff" text-anchor="middle" textLength="13.3" lengthAdjust="spacingAndGlyphs">30</text>
<text x="601.5" y="767.5" font-family="Liberation Sans, sans-serif" font-size="13" fill="#fff" text-anchor="middle" textLength="13.3" lengthAdjust="spacingAndGlyphs">40</text>
<text x="661.5" y="767.5" font-family="Liberation Sans, sans-serif" font-size="13" fill="#fff" text-anchor="middle" textLength="13.3" lengthAdjust="spacingAndGlyphs">50</text>
<text x="276.6" y="781" font-family="Liberation Sans, sans-serif" font-size="13" fill="#fff" textLength="171" lengthAdjust="spacingAndGlyphs" xml:space="preserve">Temperature, Dewpoint  [ °C ]</text>
<line x1="61.5" y1="788" x2="61.5" y2="793" stroke="#fff" shape-rendering="crispEdges"/>
<text x="61.5" y="805.5" font-family="Liberation Sans, sans-serif" font-size="13" fill="#fff" text-anchor="middle" textLength="6.7" lengthAdjust="spacingAndGlyphs">0</text>
<line x1="121.5" y1="788" x2="121.5" y2="793" stroke="#fff" shape-rendering="crispEdges"/>
<text x="121.5" y="805.5" font-family="Liberation Sans, sans-serif" font-size="13" fill="#fff" text-anchor="middle" textLength="13.3" lengthAdjust="spacingAndGlyphs">10</text>
<line x1="181.5" y1="788" x2="181.5" y2="793" stroke="#fff" shape-rendering="crispEdges"/>
<text x="181.5" y="805.5" font-family="Liberation Sans, sans-serif" font-size="13" fill="#fff" text-anchor="middle" textLength="13.3" lengthAdjust="spacingAndGlyphs">20</text>
<line x1="241.5" y1="788" x2="241.5" y2="793" stroke="#fff" shape-rendering="crispEdges"/>
<text x="241.5" y="805.5" font-family="Liberation Sans, sans-serif" font-size="13" fill="#fff" text-anchor="middle" textLength="13.3" lengthAdjust="spacingAndGlyphs">30</text>
<line x1="301.5" y1="788" x2="301.5" y2="793" stroke="#fff" shape-rendering="crispEdges"/>
<text x="301.5" y="805.5" font-family="Liberation Sans, sans-serif" font-size="13" fill="#fff" text-anchor="middle" textLength="13.3" lengthAdjust="spacingAndGlyphs">40</text>
<line x1="361.5" y1="788" x2="361.5" y2="793" stroke="#fff" shape-rendering="crispEdges"/>
<text x="361.5" y="805.5" font-family="Liberation Sans, sans-serif" font-size="13" fill="#fff" text-anchor="middle" textLength="13.3" lengthAdjust="spacingAndGlyphs">50</text>
<line x1="421.5" y1="788" x2="421.5" y2="793" stroke="#fff" shape-rendering="crispEdges"/>
<text x="421.5" y="805.5" font-family="Liberation Sans, sans-serif" font-size="13" fill="#fff" text-anchor="middle" textLength="13.3" lengthAdjust="spacingAndGlyphs">60</text>
<line x1="481.5" y1="788" x2="481.5" y2="793" stroke="#fff" shape-rendering="crispEdges"/>
<text x="481.5" y="805.5" font-family="Liberation Sans, sans-serif" font-size="13" fill="#fff" text-anchor="middle" textLength="13.3" lengthAdjust="spacingAndGlyphs">70</text>
<line x1="541.5" y1="788" x2="541.5" y2="793" stroke="#fff" shape-rendering="crispEdges"/>
<text x="541.5" y="805.5" font-family="Liberation Sans, sans-serif" font-size="13" fill="#fff" text-anchor="middle" textLength="13.3" lengthAdjust="spacingAndGlyphs">80</text>
<line x1="601.5" y1="788" x2="601.5" y2="793" stroke="#fff" shape-rendering="crispEdges"/>
<text x="601.5" y="805.5" font-family="Liberation Sans, sans-serif" font-size="13" fill="#fff" text-anchor="middle" textLength="13.3" lengthAdjust="spacingAndGlyphs">90</text>
<line x1="661.5" y1="788" x2="661.5" y2="793" stroke="#fff" shape-rendering="crispEdges"/>
<text x="661.5" y="805.5" font-family="Liberation Sans, sans-serif" font-size="13" fill="#fff" text-anchor="middle" textLength="20.0" lengthAdjust="spacingAndGlyphs">100</text>
<text x="307.4" y="818.5" font-family="Liberation Sans, sans-serif" font-size="13" fill="#fff" textLength="106" lengthAdjust="spacingAndGlyphs" xml:space="preserve">Windspeed  [ knt ]</text>
<line x1="61.5" y1="826" x2="61.5" y2="831" stroke="#fff" shape-rendering="crispEdges"/>
<text x="61.5" y="842.5" font-family="Liberation Sans, sans-serif" font-size="13" fill="#fff" text-anchor="middle" textLength="6.7" lengthAdjust="spacingAndGlyphs">0</text>
<line x1="121.5" y1="826" x2="121.5" y2="831" stroke="#fff" shape-rendering="crispEdges"/>
<text x="121.5" y="842.5" font-family="Liberation Sans, sans-serif" font-size="13" fill="#fff" text-anchor="middle" textLength="20.0" lengthAdjust="spacingAndGlyphs">300</text>
<line x1="181.5" y1="826" x2="181.5" y2="831" stroke="#fff" shape-rendering="crispEdges"/>
<text x="181.5" y="842.5" font-family="Liberation Sans, sans-serif" font-size="13" fill="#fff" text-anchor="middle" textLength="20.0" lengthAdjust="spacingAndGlyphs">600</text>
<line x1="241.5" y1="826" x2="241.5" y2="831" stroke="#fff" shape-rendering="crispEdges"/>
<text x="241.5" y="842.5" font-family="Liberation Sans, sans-serif" font-size="13" fill="#fff" text-anchor="middle" textLength="20.0" lengthAdjust="spacingAndGlyphs">900</text>
<line x1="301.5" y1="826" x2="301.5" y2="831" stroke="#fff" shape-rendering="crispEdges"/>
<text x="301.5" y="842.5" font-family="Liberation Sans, sans-serif" font-size="13" fill="#fff" text-anchor="middle" textLength="26.6" lengthAdjust="spacingAndGlyphs">1200</text>
<line x1="361.5" y1="826" x2="361.5" y2="831" stroke="#fff" shape-rendering="crispEdges"/>
<text x="361.5" y="842.5" font-family="Liberation Sans, sans-serif" font-size="13" fill="#fff" text-anchor="middle" textLength="26.6" lengthAdjust="spacingAndGlyphs">1500</text>
<line x1="421.5" y1="826" x2="421.5" y2="831" stroke="#fff" shape-rendering="crispEdges"/>
<text x="421.5" y="842.5" font-family="Liberation Sans, sans-serif" font-size="13" fill="#fff" text-anchor="middle" textLength="26.6" lengthAdjust="spacingAndGlyphs">1800</text>
<line x1="481.5" y1="826" x2="481.5" y2="831" stroke="#fff" shape-rendering="crispEdges"/>
<text x="481.5" y="842.5" font-family="Liberation Sans, sans-serif" font-size="13" fill="#fff" text-anchor="middle" textLength="26.6" lengthAdjust="spacingAndGlyphs">2100</text>
<line x1="541.5" y1="826" x2="541.5" y2="831" stroke="#fff" shape-rendering="crispEdges"/>
<text x="541.5" y="842.5" font-family="Liberation Sans, sans-serif" font-size="13" fill="#fff" text-anchor="middle" textLength="26.6" lengthAdjust="spacingAndGlyphs">2400</text>
<line x1="601.5" y1="826" x2="601.5" y2="831" stroke="#fff" shape-rendering="crispEdges"/>
<text x="601.5" y="842.5" font-family="Liberation Sans, sans-serif" font-size="13" fill="#fff" text-anchor="middle" textLength="26.6" lengthAdjust="spacingAndGlyphs">2700</text>
<line x1="661.5" y1="826" x2="661.5" y2="831" stroke="#fff" shape-rendering="crispEdges"/>
<text x="661.5" y="842.5" font-family="Liberation Sans, sans-serif" font-size="13" fill="#fff" text-anchor="middle" textLength="26.6" lengthAdjust="spacingAndGlyphs">3000</text>
<text x="292.5" y="857" font-family="Liberation Sans, sans-serif" font-size="13" fill="#fff" textLength="137" lengthAdjust="spacingAndGlyphs" xml:space="preserve">CAPE, CINH * 5  [ J/kg ]</text>
<line x1="61.5" y1="863" x2="61.5" y2="868" stroke="#fff" shape-rendering="crispEdges"/>
<text x="61.5" y="879.5" font-family="Liberation Sans, sans-serif" font-size="13" fill="#fff" text-anchor="middle" textLength="23.8" lengthAdjust="spacingAndGlyphs">-100</text>
<line x1="136.5" y1="863" x2="136.5" y2="868" stroke="#fff" shape-rendering="crispEdges"/>
<text x="136.5" y="879.5" font-family="Liberation Sans, sans-serif" font-size="13" fill="#fff" text-anchor="middle" textLength="17.1" lengthAdjust="spacingAndGlyphs">-50</text>
<line x1="211.5" y1="863" x2="211.5" y2="868" stroke="#fff" shape-rendering="crispEdges"/>
<text x="211.5" y="879.5" font-family="Liberation Sans, sans-serif" font-size="13" fill="#fff" text-anchor="middle" textLength="6.7" lengthAdjust="spacingAndGlyphs">0</text>
<line x1="286.5" y1="863" x2="286.5" y2="868" stroke="#fff" shape-rendering="crispEdges"/>
<text x="286.5" y="879.5" font-family="Liberation Sans, sans-serif" font-size="13" fill="#fff" text-anchor="middle" textLength="13.3" lengthAdjust="spacingAndGlyphs">50</text>
<line x1="361.5" y1="863" x2="361.5" y2="868" stroke="#fff" shape-rendering="crispEdges"/>
<text x="361.5" y="879.5" font-family="Liberation Sans, sans-serif" font-size="13" fill="#fff" text-anchor="middle" textLength="20.0" lengthAdjust="spacingAndGlyphs">100</text>
<line x1="436.5" y1="863" x2="436.5" y2="868" stroke="#fff" shape-rendering="crispEdges"/>
<text x="436.5" y="879.5" font-family="Liberation Sans, sans-serif" font-size="13" fill="#fff" text-anchor="middle" textLength="20.0" lengthAdjust="spacingAndGlyphs">150</text>
<line x1="511.5" y1="863" x2="511.5" y2="868" stroke="#fff" shape-rendering="crispEdges"/>
<text x="511.5" y="879.5" font-family="Liberation Sans, sans-serif" font-size="13" fill="#fff" text-anchor="middle" textLength="20.0" lengthAdjust="spacingAndGlyphs">200</text>
<line x1="586.5" y1="863" x2="586.5" y2="868" stroke="#fff" shape-rendering="crispEdges"/>
<text x="586.5" y="879.5" font-family="Liberation Sans, sans-serif" font-size="13" fill="#fff" text-anchor="middle" textLength="20.0" lengthAdjust="spacingAndGlyphs">250</text>
<line x1="661.5" y1="863" x2="661.5" y2="868" stroke="#fff" shape-rendering="crispEdges"/>
<text x="661.5" y="879.5" font-family="Liberation Sans, sans-serif" font-size="13" fill="#fff" text-anchor="middle" textLength="20.0" lengthAdjust="spacingAndGlyphs">300</text>
<text x="259.5" y="892.5" font-family="Liberation Sans, sans-serif" font-size="13" fill="#fff" textLength="204" lengthAdjust="spacingAndGlyphs" xml:space="preserve">Storm Relative Helicity  [ m^2/s^2 ]</text>
<line x1="61.5" y1="749" x2="61.5" y2="755" stroke="#fff" shape-rendering="crispEdges"/>
<line x1="121.5" y1="749" x2="121.5" y2="755" stroke="#fff" shape-rendering="crispEdges"/>
<line x1="181.5" y1="749" x2="181.5" y2="755" stroke="#fff" shape-rendering="crispEdges"/>
<line x1="241.5" y1="749" x2="241.5" y2="755" stroke="#fff" shape-rendering="crispEdges"/>
<line x1="301.5" y1="749" x2="301.5" y2="755" stroke="#fff" shape-rendering="crispEdges"/>
<line x1="361.5" y1="749" x2="361.5" y2="755" stroke="#fff" shape-rendering="crispEdges"/>
<line x1="421.5" y1="749" x2="421.5" y2="755" stroke="#fff" shape-rendering="crispEdges"/>
<line x1="481.5" y1="749" x2="481.5" y2="755" stroke="#fff" shape-rendering="crispEdges"/>
<line x1="541.5" y1="749" x2="541.5" y2="755" stroke="#fff" shape-rendering="crispEdges"/>
<line x1="601.5" y1="749" x2="601.5" y2="755" stroke="#fff" shape-rendering="crispEdges"/>
<line x1="661.5" y1="749" x2="661.5" y2="755" stroke="#fff" shape-rendering="crispEdges"/>
<rect x="67.5" y="607.5" width="43" height="17" fill="#000" stroke="#ffff00"/>
<text x="89" y="621" font-family="Liberation Sans, sans-serif" font-size="13" fill="#ffff00" text-anchor="middle">CAPE</text>
<rect x="67.5" y="636.5" width="57" height="17" fill="#000" stroke="#e07000"/>
<text x="96" y="650" font-family="Liberation Sans, sans-serif" font-size="13" fill="#e07000" text-anchor="middle">CINH * 5</text>
<text x="62" y="28.3" font-family="Liberation Sans, sans-serif" font-size="16" font-weight="bold" fill="#fff" textLength="242" lengthAdjust="spacingAndGlyphs">Station: 06610 Payerne (LSMP)</text>
<text x="324.5" y="28.3" font-family="Liberation Sans, sans-serif" font-size="16" font-weight="bold" fill="#fff" textLength="127" lengthAdjust="spacingAndGlyphs">Date: 01.08.2017</text>
<text x="475.7" y="28.3" font-family="Liberation Sans, sans-serif" font-size="16" font-weight="bold" fill="#fff" textLength="90" lengthAdjust="spacingAndGlyphs">Time: 1100Z</text>
<text x="761" y="32" font-family="Liberation Sans, sans-serif" font-size="12.5" font-weight="bold" fill="#00ff00" text-anchor="middle">OBS</text>
<text x="826.5" y="32" font-family="Liberation Sans, sans-serif" font-size="12.5" font-weight="bold" fill="#ff0080" text-anchor="middle">SR</text>
<line x1="761.5" y1="40" x2="761.5" y2="769" stroke="#00ff00" shape-rendering="crispEdges"/>
<line x1="826.5" y1="40" x2="826.5" y2="769" stroke="#ff0080" shape-rendering="crispEdges"/>
<path d="M761.5,59.2L744.0,82.8M761.5,67.1L744.0,90.9M761.5,76.6L743.6,98.7M761.5,107.5L737.4,123.8M761.5,111.7L738.1,128.5M761.5,125.4L741.0,145.9M761.5,136.6L741.0,156.6M761.5,155.9L741.0,175.8M761.5,159.6L741.0,179.5M761.5,175.0L739.1,192.7M761.5,183.9L737.4,199.4M761.5,186.1L738.1,202.3M761.5,206.0L739.1,223.4M761.5,213.0L738.1,229.6M761.5,218.5L737.4,234.7M761.5,233.3L739.6,250.6M761.5,245.0L739.1,262.7M761.5,249.9L739.1,267.6M761.5,264.6L741.0,284.8M761.5,276.7L741.0,296.8M761.5,285.0L741.0,305.6M761.5,287.2L741.0,307.5M761.5,290.6L741.0,310.0M761.5,300.5L741.0,320.4M761.5,321.1L741.0,341.7M761.5,323.3L741.0,344.0M761.5,326.3L741.0,346.5M761.5,328.5L740.3,348.4M761.5,342.5L739.1,360.5M761.5,357.9L739.1,375.2M761.5,364.6L738.1,381.5M761.5,394.8L737.4,410.6M761.5,440.6L739.1,459.0M761.5,441.7L739.1,460.0M761.5,450.2L739.1,467.5M761.5,455.4L739.1,473.3M761.5,466.4L739.1,483.4M761.5,470.1L739.1,487.8M761.5,482.6L739.1,499.6M761.5,487.0L739.1,504.7M761.5,490.7L739.1,508.4M761.5,495.2L739.1,513.6M761.5,502.1L740.0,520.5M761.5,518.7L740.3,538.4M761.5,524.4L740.3,544.2M761.5,530.0L741.0,549.5M761.5,536.6L741.0,557.4M761.5,539.5L741.0,560.5M761.5,549.0L741.0,568.4M761.5,551.6L741.0,572.1M761.5,555.8L741.0,575.8M761.5,561.6L741.6,581.6M761.5,564.7L741.6,584.2M761.5,569.5L741.6,589.5M761.5,572.6L742.1,593.7M761.5,577.9L743.2,599.5M761.5,586.8L745.2,609.8M761.5,597.9L746.8,621.0M761.5,602.6L747.4,624.0M761.5,610.0L741.0,622.6M761.5,615.8L741.0,629.5M761.5,619.0L741.0,635.3M761.5,622.0L742.1,639.5M761.5,628.4L745.3,652.6M761.5,636.8L746.3,663.2M761.5,639.0L747.4,660.0M761.5,665.3L748.6,691.4M761.5,705.7L739.4,687.2M761.5,696.4L736.8,713.3M761.5,693.9L737.7,708.2M761.5,720.8L764.6,677.0M761.5,719.2L756.2,683.0M761.5,720.8L771.4,680.4M761.5,719.2L770.5,694.7M761.5,722.5L775.6,698.1M761.5,720.8L786.5,705.7M761.5,724.2L785.7,709.0M761.5,725.9L789.0,717.5M761.5,731.8L783.2,714.1M761.5,719.2L752.0,704.0M826.5,59.2L847.9,95.3M826.5,67.1L843.5,91.6M826.5,76.6L846.0,95.0M826.5,107.5L805.2,127.0M826.5,111.7L806.6,132.9M826.5,125.4L813.3,151.3M826.5,136.6L814.0,162.5M826.5,155.9L819.0,183.0M826.5,159.6L817.0,186.8M826.5,175.0L807.4,196.4M826.5,183.9L804.4,201.6M826.5,186.1L805.2,204.5M826.5,206.0L809.6,226.6M826.5,213.0L805.2,232.5M826.5,218.5L804.4,236.2M826.5,233.3L806.3,252.4M826.5,245.0L806.6,265.0M826.5,249.9L805.9,270.1M826.5,264.6L808.8,285.6M826.5,276.7L808.1,298.3M826.5,285.0L808.1,305.0M826.5,287.2L808.1,308.6M826.5,290.6L808.1,312.3M826.5,300.5L808.1,322.6M826.5,321.1L808.8,348.0M826.5,323.3L808.8,349.0M826.5,326.3L808.8,350.0M826.5,328.5L808.8,351.0M826.5,342.5L805.9,362.8M826.5,357.9L805.2,377.8M826.5,364.6L805.2,383.7M826.5,394.8L802.9,411.7M826.5,440.6L806.6,461.3M826.5,450.2L807.4,470.8M826.5,455.4L807.4,476.7M826.5,466.4L807.4,486.3M826.5,470.1L807.4,490.7M826.5,482.6L807.4,504.0M826.5,487.0L808.0,507.0M826.5,490.7L808.0,512.0M826.5,495.2L808.0,514.0M826.5,502.1L809.5,524.2M826.5,518.7L810.5,542.1M826.5,524.4L810.5,548.4M826.5,530.0L811.0,553.7M826.5,536.6L811.6,561.6M826.5,539.5L811.6,564.2M826.5,549.0L810.5,572.6M826.5,551.6L810.5,575.8M826.5,555.8L810.5,579.5M826.5,561.6L810.5,585.8M826.5,564.7L811.0,588.4M826.5,569.5L811.6,592.6M826.5,572.6L812.1,595.8M826.5,577.9L814.7,599.5M826.5,586.8L819.0,613.6M826.5,597.9L819.5,622.0M826.5,602.6L810.0,626.3M826.5,610.0L811.0,633.7M826.5,615.8L812.1,640.5M826.5,619.0L813.2,644.7M826.5,628.4L818.4,656.3M826.5,636.8L821.0,665.3M826.5,639.0L823.2,669.0M826.5,665.8L840.0,679.5M826.5,665.3L844.6,684.6M826.5,681.3L853.0,688.8M826.5,683.8L854.7,692.2M826.5,692.2L852.2,680.4M826.5,697.3L852.2,684.6M826.5,705.7L849.7,695.6M826.5,712.4L851.4,704.8M826.5,719.2L851.4,706.5M826.5,722.5L851.4,711.6M826.5,727.6L851.4,718.3M826.5,731.8L851.4,718.3" stroke="#fff" stroke-width="1.1" fill="none"/>
<text x="894" y="39.6" font-family="Liberation Sans, sans-serif" font-size="13" fill="#fff">Parameter</text>
<line x1="894" y1="41.6" x2="953.3" y2="41.6" stroke="#fff" stroke-width="1" shape-rendering="crispEdges"/>
<text x="1064.2" y="39.6" font-family="Liberation Sans, sans-serif" font-size="13" fill="#fff">Value LCL</text>
<line x1="1064.2" y1="41.6" x2="1123.5" y2="41.6" stroke="#fff" stroke-width="1" shape-rendering="crispEdges"/>
<text x="1152" y="39.6" font-family="Liberation Sans, sans-serif" font-size="13" fill="#fff">Value CCL</text>
<line x1="1152" y1="41.6" x2="1213.4" y2="41.6" stroke="#fff" stroke-width="1" shape-rendering="crispEdges"/>
<text x="1230.2" y="39.6" font-family="Liberation Sans, sans-serif" font-size="13" fill="#fff">Unit</text>
<line x1="1230.2" y1="41.6" x2="1252.2" y2="41.6" stroke="#fff" stroke-width="1" shape-rendering="crispEdges"/>
<text x="894" y="61.6" font-family="Liberation Sans, sans-serif" font-size="13" fill="#fff">Convective Temperature:</text>
<text x="1123.8" y="61.6" font-family="Liberation Sans, sans-serif" font-size="13" fill="#ff0000" text-anchor="end">34.71</text>
<text x="1230.5" y="61.6" font-family="Liberation Sans, sans-serif" font-size="13" fill="#fff">[°C]</text>
<text x="894" y="78.6" font-family="Liberation Sans, sans-serif" font-size="13" fill="#fff">Snowfall Height:</text>
<text x="1123.8" y="78.6" font-family="Liberation Sans, sans-serif" font-size="13" fill="#ffffff" text-anchor="end">3652.40</text>
<text x="1230.5" y="78.6" font-family="Liberation Sans, sans-serif" font-size="13" fill="#fff">[m]</text>
<text x="894" y="103.6" font-family="Liberation Sans, sans-serif" font-size="13" fill="#fff">Parcels: Using 100mB mean layer LCL + CCL</text>
<line x1="894" y1="105.6" x2="1158.8" y2="105.6" stroke="#fff" stroke-width="1" shape-rendering="crispEdges"/>
<text x="894" y="123.4" font-family="Liberation Sans, sans-serif" font-size="13" fill="#fff">Lifted Index:</text>
<text x="1123.8" y="123.4" font-family="Liberation Sans, sans-serif" font-size="13" fill="#ff0000" text-anchor="end">-3.95</text>
<text x="1213.7" y="123.4" font-family="Liberation Sans, sans-serif" font-size="13" fill="#ff0000" text-anchor="end">-7.00</text>
<text x="1230.5" y="123.4" font-family="Liberation Sans, sans-serif" font-size="13" fill="#fff">[°C]</text>
<text x="894" y="140.4" font-family="Liberation Sans, sans-serif" font-size="13" fill="#fff">CAPE:</text>
<text x="1123.8" y="140.4" font-family="Liberation Sans, sans-serif" font-size="13" fill="#ff0000" text-anchor="end">751.26</text>
<text x="1213.7" y="140.4" font-family="Liberation Sans, sans-serif" font-size="13" fill="#ff0000" text-anchor="end">2079.71</text>
<text x="1230.5" y="140.4" font-family="Liberation Sans, sans-serif" font-size="13" fill="#fff">[J/kg]</text>
<text x="894" y="157.4" font-family="Liberation Sans, sans-serif" font-size="13" fill="#fff">CINH | LSI (LCL: 792mB):</text>
<text x="1123.8" y="157.4" font-family="Liberation Sans, sans-serif" font-size="13" fill="#00ff00" text-anchor="end">229.30</text>
<text x="1124.3" y="157.4" font-family="Liberation Sans, sans-serif" font-size="13" fill="#fff">,</text>
<text x="1136.4" y="157.4" font-family="Liberation Sans, sans-serif" font-size="13" fill="#ffff00">3.90</text>
<text x="1230.5" y="157.4" font-family="Liberation Sans, sans-serif" font-size="13" fill="#fff">[J/kg], [°C]</text>
<text x="894" y="174.4" font-family="Liberation Sans, sans-serif" font-size="13" fill="#fff">CAPE Virt.:</text>
<text x="1123.8" y="174.4" font-family="Liberation Sans, sans-serif" font-size="13" fill="#ff0000" text-anchor="end">791.97</text>
<text x="1213.7" y="174.4" font-family="Liberation Sans, sans-serif" font-size="13" fill="#ff0000" text-anchor="end">1956.73</text>
<text x="1230.5" y="174.4" font-family="Liberation Sans, sans-serif" font-size="13" fill="#fff">[J/kg]</text>
<text x="894" y="191.4" font-family="Liberation Sans, sans-serif" font-size="13" fill="#fff">CINH Virt.:</text>
<text x="1123.8" y="191.4" font-family="Liberation Sans, sans-serif" font-size="13" fill="#00ff00" text-anchor="end">175.81</text>
<text x="1230.5" y="191.4" font-family="Liberation Sans, sans-serif" font-size="13" fill="#fff">[J/kg]</text>
<text x="894" y="208.4" font-family="Liberation Sans, sans-serif" font-size="13" fill="#fff">3km SFC CAPE | IL CAPE:</text>
<text x="1123.8" y="208.4" font-family="Liberation Sans, sans-serif" font-size="13" fill="#00ff00" text-anchor="end">7.72</text>
<text x="1124.3" y="208.4" font-family="Liberation Sans, sans-serif" font-size="13" fill="#fff">,</text>
<text x="1136.4" y="208.4" font-family="Liberation Sans, sans-serif" font-size="13" fill="#ff0000">821.80</text>
<text x="1230.5" y="208.4" font-family="Liberation Sans, sans-serif" font-size="13" fill="#fff">[J/kg]</text>
<text x="894" y="225.4" font-family="Liberation Sans, sans-serif" font-size="13" fill="#fff">DCAPE (LFS = 500mB):</text>
<text x="1123.8" y="225.4" font-family="Liberation Sans, sans-serif" font-size="13" fill="#ff0000" text-anchor="end">744.91</text>
<text x="1230.5" y="225.4" font-family="Liberation Sans, sans-serif" font-size="13" fill="#fff">[J/kg]</text>
<text x="894" y="242.4" font-family="Liberation Sans, sans-serif" font-size="13" fill="#fff">850-600 Lapse Rate:</text>
<text x="1123.8" y="242.4" font-family="Liberation Sans, sans-serif" font-size="13" fill="#ff0000" text-anchor="end">21.02</text>
<text x="1230.5" y="242.4" font-family="Liberation Sans, sans-serif" font-size="13" fill="#fff">[°C]</text>
<text x="894" y="259.4" font-family="Liberation Sans, sans-serif" font-size="13" fill="#fff">FM Hail Size | SHIP | LHP:</text>
<text x="1123.8" y="259.4" font-family="Liberation Sans, sans-serif" font-size="13" fill="#ffff00" text-anchor="end">1.9 - 2.5</text>
<text x="1124.3" y="259.4" font-family="Liberation Sans, sans-serif" font-size="13" fill="#fff">,</text>
<text x="1136.4" y="259.4" font-family="Liberation Sans, sans-serif" font-size="13" fill="#ff0000">2.91</text>
<text x="1136.4" y="259.4" font-family="Liberation Sans, sans-serif" font-size="13" fill="#fff"><tspan fill="none">2.91</tspan>,</text>
<text x="1174.3" y="259.4" font-family="Liberation Sans, sans-serif" font-size="13" fill="#ff0000">11.93</text>
<text x="1230.5" y="259.4" font-family="Liberation Sans, sans-serif" font-size="13" fill="#fff">[cm], [1], [1]</text>
<text x="894" y="276.4" font-family="Liberation Sans, sans-serif" font-size="13" fill="#fff">Estofex Exp. Hail Param:</text>
<text x="1123.8" y="276.4" font-family="Liberation Sans, sans-serif" font-size="13" fill="#ff0000" text-anchor="end">4.57</text>
<text x="1230.5" y="276.4" font-family="Liberation Sans, sans-serif" font-size="13" fill="#fff">[cm]</text>
<text x="894" y="293.4" font-family="Liberation Sans, sans-serif" font-size="13" fill="#fff">Max. Hail Size (OLD, MU, IL):</text>
<text x="1123.8" y="293.4" font-family="Liberation Sans, sans-serif" font-size="13" fill="#ff0000" text-anchor="end">3.84</text>
<text x="1124.3" y="293.4" font-family="Liberation Sans, sans-serif" font-size="13" fill="#fff">,</text>
<text x="1136.4" y="293.4" font-family="Liberation Sans, sans-serif" font-size="13" fill="#ff0000">5.00</text>
<text x="1136.4" y="293.4" font-family="Liberation Sans, sans-serif" font-size="13" fill="#fff"><tspan fill="none">5.00</tspan>,</text>
<text x="1173" y="293.4" font-family="Liberation Sans, sans-serif" font-size="13" fill="#ff0000">4.08</text>
<text x="1230.5" y="293.4" font-family="Liberation Sans, sans-serif" font-size="13" fill="#fff">[cm]</text>
<text x="894" y="313.6" font-family="Liberation Sans, sans-serif" font-size="13" fill="#fff">LCL / CCL (AGL):</text>
<text x="1123.8" y="313.6" font-family="Liberation Sans, sans-serif" font-size="13" fill="#ffff00" text-anchor="end">1647.13</text>
<text x="1213.7" y="313.6" font-family="Liberation Sans, sans-serif" font-size="13" fill="#00ff00" text-anchor="end">2450.14</text>
<text x="1230.5" y="313.6" font-family="Liberation Sans, sans-serif" font-size="13" fill="#fff">[m]</text>
<text x="894" y="330.6" font-family="Liberation Sans, sans-serif" font-size="13" fill="#fff">Convective Height:</text>
<text x="1123.8" y="330.6" font-family="Liberation Sans, sans-serif" font-size="13" fill="#ff0000" text-anchor="end">9.70</text>
<text x="1213.7" y="330.6" font-family="Liberation Sans, sans-serif" font-size="13" fill="#ff0000" text-anchor="end">9.69</text>
<text x="1230.5" y="330.6" font-family="Liberation Sans, sans-serif" font-size="13" fill="#fff">[km]</text>
<text x="894" y="355.4" font-family="Liberation Sans, sans-serif" font-size="13" fill="#fff">Convective Indices</text>
<line x1="894" y1="357.4" x2="999.5" y2="357.4" stroke="#fff" stroke-width="1" shape-rendering="crispEdges"/>
<text x="894" y="376.0" font-family="Liberation Sans, sans-serif" font-size="13" fill="#fff">Showalter Index:</text>
<text x="1123.8" y="376.0" font-family="Liberation Sans, sans-serif" font-size="13" fill="#ff0000" text-anchor="end">-1.90</text>
<text x="1230.5" y="376.0" font-family="Liberation Sans, sans-serif" font-size="13" fill="#fff">[°C]</text>
<text x="894" y="393.0" font-family="Liberation Sans, sans-serif" font-size="13" fill="#fff">Modified Thompson Index:</text>
<text x="1123.8" y="393.0" font-family="Liberation Sans, sans-serif" font-size="13" fill="#ff0000" text-anchor="end">45.15</text>
<text x="1230.5" y="393.0" font-family="Liberation Sans, sans-serif" font-size="13" fill="#fff">[°C]</text>
<text x="894" y="410.0" font-family="Liberation Sans, sans-serif" font-size="13" fill="#fff">Total Totals Index:</text>
<text x="1123.8" y="410.0" font-family="Liberation Sans, sans-serif" font-size="13" fill="#ff0000" text-anchor="end">52.20</text>
<text x="1230.5" y="410.0" font-family="Liberation Sans, sans-serif" font-size="13" fill="#fff">[°C]</text>
<text x="894" y="427.0" font-family="Liberation Sans, sans-serif" font-size="13" fill="#fff">KO Index:</text>
<text x="1123.8" y="427.0" font-family="Liberation Sans, sans-serif" font-size="13" fill="#ff0000" text-anchor="end">-13.71</text>
<text x="1230.5" y="427.0" font-family="Liberation Sans, sans-serif" font-size="13" fill="#fff">[1]</text>
<text x="894" y="444.0" font-family="Liberation Sans, sans-serif" font-size="13" fill="#fff">Craven SigSvr / 1000:</text>
<text x="1123.8" y="444.0" font-family="Liberation Sans, sans-serif" font-size="13" fill="#ff0000" text-anchor="end">22.09</text>
<text x="1230.5" y="444.0" font-family="Liberation Sans, sans-serif" font-size="13" fill="#fff">[m^3/s^3]</text>
<text x="894" y="461.0" font-family="Liberation Sans, sans-serif" font-size="13" fill="#fff">SCP RM (new, old):</text>
<text x="1123.8" y="461.0" font-family="Liberation Sans, sans-serif" font-size="13" fill="#ffff00" text-anchor="end">1.06</text>
<text x="1124.3" y="461.0" font-family="Liberation Sans, sans-serif" font-size="13" fill="#fff">,</text>
<text x="1136.4" y="461.0" font-family="Liberation Sans, sans-serif" font-size="13" fill="#ff0000">3.94</text>
<text x="1230.5" y="461.0" font-family="Liberation Sans, sans-serif" font-size="13" fill="#fff">[1]</text>
<text x="894" y="478.0" font-family="Liberation Sans, sans-serif" font-size="13" fill="#fff">STP (new, old):</text>
<text x="1123.8" y="478.0" font-family="Liberation Sans, sans-serif" font-size="13" fill="#00ff00" text-anchor="end">0.03</text>
<text x="1124.3" y="478.0" font-family="Liberation Sans, sans-serif" font-size="13" fill="#fff">,</text>
<text x="1136.4" y="478.0" font-family="Liberation Sans, sans-serif" font-size="13" fill="#00ff00">0.07</text>
<text x="1230.5" y="478.0" font-family="Liberation Sans, sans-serif" font-size="13" fill="#fff">[1]</text>
<text x="894" y="495.0" font-family="Liberation Sans, sans-serif" font-size="13" fill="#fff">SB STP (fix) | CWASP:</text>
<text x="1123.8" y="495.0" font-family="Liberation Sans, sans-serif" font-size="13" fill="#ff0000" text-anchor="end">0.35</text>
<text x="1124.3" y="495.0" font-family="Liberation Sans, sans-serif" font-size="13" fill="#fff">,</text>
<text x="1136.4" y="495.0" font-family="Liberation Sans, sans-serif" font-size="13" fill="#ffff00">53.54</text>
<text x="1230.5" y="495.0" font-family="Liberation Sans, sans-serif" font-size="13" fill="#fff">[1], [%]</text>
<text x="894" y="512.0" font-family="Liberation Sans, sans-serif" font-size="13" fill="#fff">DCP | MMP | MSP:</text>
<text x="1123.8" y="512.0" font-family="Liberation Sans, sans-serif" font-size="13" fill="#ff0000" text-anchor="end">3.19</text>
<text x="1124.3" y="512.0" font-family="Liberation Sans, sans-serif" font-size="13" fill="#fff">,</text>
<text x="1136.4" y="512.0" font-family="Liberation Sans, sans-serif" font-size="13" fill="#ff0000">98.44</text>
<text x="1136.4" y="512.0" font-family="Liberation Sans, sans-serif" font-size="13" fill="#fff"><tspan fill="none">98.44</tspan>,</text>
<text x="1180" y="512.0" font-family="Liberation Sans, sans-serif" font-size="13" fill="#ffff00">70.60</text>
<text x="1230.5" y="512.0" font-family="Liberation Sans, sans-serif" font-size="13" fill="#fff">[1], [%], [%]</text>
<text x="894" y="529.0" font-family="Liberation Sans, sans-serif" font-size="13" fill="#fff">MB Comp | SHERBE:</text>
<text x="1123.8" y="529.0" font-family="Liberation Sans, sans-serif" font-size="13" fill="#00ff00" text-anchor="end">0.00</text>
<text x="1124.3" y="529.0" font-family="Liberation Sans, sans-serif" font-size="13" fill="#fff">,</text>
<text x="1136.4" y="529.0" font-family="Liberation Sans, sans-serif" font-size="13" fill="#ff0000">2.09</text>
<text x="1230.5" y="529.0" font-family="Liberation Sans, sans-serif" font-size="13" fill="#fff">[1], [1]</text>
<text x="894" y="546.0" font-family="Liberation Sans, sans-serif" font-size="13" fill="#fff">Exp. Supercell Index CH:</text>
<text x="1123.8" y="546.0" font-family="Liberation Sans, sans-serif" font-size="13" fill="#ff0000" text-anchor="end">6.12</text>
<text x="1230.5" y="546.0" font-family="Liberation Sans, sans-serif" font-size="13" fill="#fff">[1]</text>
<text x="894" y="563.0" font-family="Liberation Sans, sans-serif" font-size="13" fill="#fff">SWISS 12 Index:</text>
<text x="1123.8" y="563.0" font-family="Liberation Sans, sans-serif" font-size="13" fill="#ff0000" text-anchor="end">-14.46</text>
<text x="1230.5" y="563.0" font-family="Liberation Sans, sans-serif" font-size="13" fill="#fff">[1]</text>
<text x="894" y="580.0" font-family="Liberation Sans, sans-serif" font-size="13" fill="#fff">Precipitable Water:</text>
<text x="1123.8" y="580.0" font-family="Liberation Sans, sans-serif" font-size="13" fill="#ff0000" text-anchor="end">34.82</text>
<text x="1230.5" y="580.0" font-family="Liberation Sans, sans-serif" font-size="13" fill="#fff">[mm]</text>
<text x="894" y="604.5" font-family="Liberation Sans, sans-serif" font-size="13" fill="#fff">Wind Parameters</text>
<line x1="894" y1="606.5" x2="994.5" y2="606.5" stroke="#fff" stroke-width="1" shape-rendering="crispEdges"/>
<text x="894" y="625" font-family="Liberation Sans, sans-serif" font-size="13" fill="#fff">Storm Direction | Motion:</text>
<text x="1123.8" y="625" font-family="Liberation Sans, sans-serif" font-size="13" fill="#ffffff" text-anchor="end">240.57</text>
<text x="1124.3" y="625" font-family="Liberation Sans, sans-serif" font-size="13" fill="#fff">,</text>
<text x="1136.4" y="625" font-family="Liberation Sans, sans-serif" font-size="13" fill="#ff0000">24.13</text>
<text x="1230.5" y="625" font-family="Liberation Sans, sans-serif" font-size="13" fill="#fff">[°], [knt]</text>
<text x="894" y="642" font-family="Liberation Sans, sans-serif" font-size="13" fill="#fff">500m Critical Angle:</text>
<text x="1123.8" y="642" font-family="Liberation Sans, sans-serif" font-size="13" fill="#00ff00" text-anchor="end">220.57</text>
<text x="1230.5" y="642" font-family="Liberation Sans, sans-serif" font-size="13" fill="#fff">[°]</text>
<text x="894" y="662" font-family="Liberation Sans, sans-serif" font-size="13" fill="#fff">SR Wind Sfc-2km:</text>
<text x="1123.8" y="662" font-family="Liberation Sans, sans-serif" font-size="13" fill="#ff0000" text-anchor="end">21.31</text>
<text x="1230.5" y="662" font-family="Liberation Sans, sans-serif" font-size="13" fill="#fff">[knt]</text>
<text x="894" y="679" font-family="Liberation Sans, sans-serif" font-size="13" fill="#fff">SR Wind 4km-6km:</text>
<text x="1123.8" y="679" font-family="Liberation Sans, sans-serif" font-size="13" fill="#ff0000" text-anchor="end">30.30</text>
<text x="1230.5" y="679" font-family="Liberation Sans, sans-serif" font-size="13" fill="#fff">[knt]</text>
<text x="894" y="696" font-family="Liberation Sans, sans-serif" font-size="13" fill="#fff">SR Wind 9km-11km:</text>
<text x="1123.8" y="696" font-family="Liberation Sans, sans-serif" font-size="13" fill="#ff0000" text-anchor="end">40.20</text>
<text x="1230.5" y="696" font-family="Liberation Sans, sans-serif" font-size="13" fill="#fff">[knt] CL</text>
<text x="894" y="716" font-family="Liberation Sans, sans-serif" font-size="13" fill="#fff">Effective Shear 6000:</text>
<text x="1123.8" y="716" font-family="Liberation Sans, sans-serif" font-size="13" fill="#ff0000" text-anchor="end">57.15</text>
<text x="1230.5" y="716" font-family="Liberation Sans, sans-serif" font-size="13" fill="#fff">[knt]</text>
<text x="894" y="736" font-family="Liberation Sans, sans-serif" font-size="13" fill="#fff">Bulk Richardson Number:</text>
<text x="1123.8" y="736" font-family="Liberation Sans, sans-serif" font-size="13" fill="#00ff00" text-anchor="end">7.98</text>
<text x="1213.7" y="736" font-family="Liberation Sans, sans-serif" font-size="13" fill="#ffff00" text-anchor="end">22.09</text>
<text x="1230.5" y="736" font-family="Liberation Sans, sans-serif" font-size="13" fill="#fff">[1]</text>
<text x="894" y="756" font-family="Liberation Sans, sans-serif" font-size="13" fill="#fff">3km Effective SRH:</text>
<text x="1123.8" y="756" font-family="Liberation Sans, sans-serif" font-size="13" fill="#00ff00" text-anchor="end">89.20</text>
<text x="1230.5" y="756" font-family="Liberation Sans, sans-serif" font-size="13" fill="#fff">[m^2/s^2]</text>
<text x="894" y="773" font-family="Liberation Sans, sans-serif" font-size="13" fill="#fff">Max 3km SRH (0-2km) | AGL:</text>
<text x="1123.8" y="773" font-family="Liberation Sans, sans-serif" font-size="13" fill="#ff0000" text-anchor="end">260.10</text>
<text x="1124.3" y="773" font-family="Liberation Sans, sans-serif" font-size="13" fill="#fff">,</text>
<text x="1136.4" y="773" font-family="Liberation Sans, sans-serif" font-size="13" fill="#00ff00">1671.00</text>
<text x="1230.5" y="773" font-family="Liberation Sans, sans-serif" font-size="13" fill="#fff">[m^2/s^2], [m]</text>
<text x="894" y="793" font-family="Liberation Sans, sans-serif" font-size="13" fill="#fff">3km Energy Helicity Index:</text>
<text x="1123.8" y="793" font-family="Liberation Sans, sans-serif" font-size="13" fill="#00ff00" text-anchor="end">0.42</text>
<text x="1213.7" y="793" font-family="Liberation Sans, sans-serif" font-size="13" fill="#00ff00" text-anchor="end">1.16</text>
<text x="1230.5" y="793" font-family="Liberation Sans, sans-serif" font-size="13" fill="#fff">[1]</text>
<text x="894" y="810" font-family="Liberation Sans, sans-serif" font-size="13" fill="#fff">3km Vorticity Gen. Pot.:</text>
<text x="1123.8" y="810" font-family="Liberation Sans, sans-serif" font-size="13" fill="#00ff00" text-anchor="end">0.15</text>
<text x="1213.7" y="810" font-family="Liberation Sans, sans-serif" font-size="13" fill="#ff0000" text-anchor="end">0.24</text>
<text x="1230.5" y="810" font-family="Liberation Sans, sans-serif" font-size="13" fill="#fff">[m/s^2]</text>
<rect x="729" y="827" width="15" height="8" fill="#ff0000"/>
<text x="753.4" y="835" font-family="Liberation Sans, sans-serif" font-size="13" fill="#ff0000">Temperature Profile</text>
<rect x="729" y="847" width="15" height="8" fill="#00ffff"/>
<text x="753.4" y="855" font-family="Liberation Sans, sans-serif" font-size="13" fill="#00ffff">Dewpoint Profile</text>
<rect x="729" y="867" width="15" height="8" fill="#00ff00"/>
<text x="753.4" y="875" font-family="Liberation Sans, sans-serif" font-size="13" fill="#00ff00">OBS Windspeed Profile</text>
<rect x="729" y="887" width="15" height="8" fill="#ff0080"/>
<text x="753.4" y="895" font-family="Liberation Sans, sans-serif" font-size="13" fill="#ff0080">SR Windspeed Profile</text>
<rect x="729" y="907" width="15" height="8" fill="#c8c800"/>
<text x="753.4" y="915" font-family="Liberation Sans, sans-serif" font-size="13" fill="#c8c800">Sfc-3km Storm Relative Helicity Profile</text>
<rect x="729" y="927" width="15" height="8" fill="#3c3c00"/>
<text x="753.4" y="935" font-family="Liberation Sans, sans-serif" font-size="13" fill="#46461e">Effective Layer (CAPE &gt;= 100 J/kg)</text>
<rect x="1079" y="827" width="15" height="8" fill="#00ff00"/>
<text x="1103" y="835" font-family="Liberation Sans, sans-serif" font-size="13" fill="#00ff00">No / Non Severe Thunderstorms</text>
<rect x="1079" y="847" width="15" height="8" fill="#ffff00"/>
<text x="1103" y="855" font-family="Liberation Sans, sans-serif" font-size="13" fill="#ffff00">Scattered / Moderate Thunderstorms</text>
<rect x="1079" y="867" width="15" height="8" fill="#ff0000"/>
<text x="1103" y="875" font-family="Liberation Sans, sans-serif" font-size="13" fill="#ff0000">Widespread / Severe Thunderstorms</text>
</svg></body></html>
